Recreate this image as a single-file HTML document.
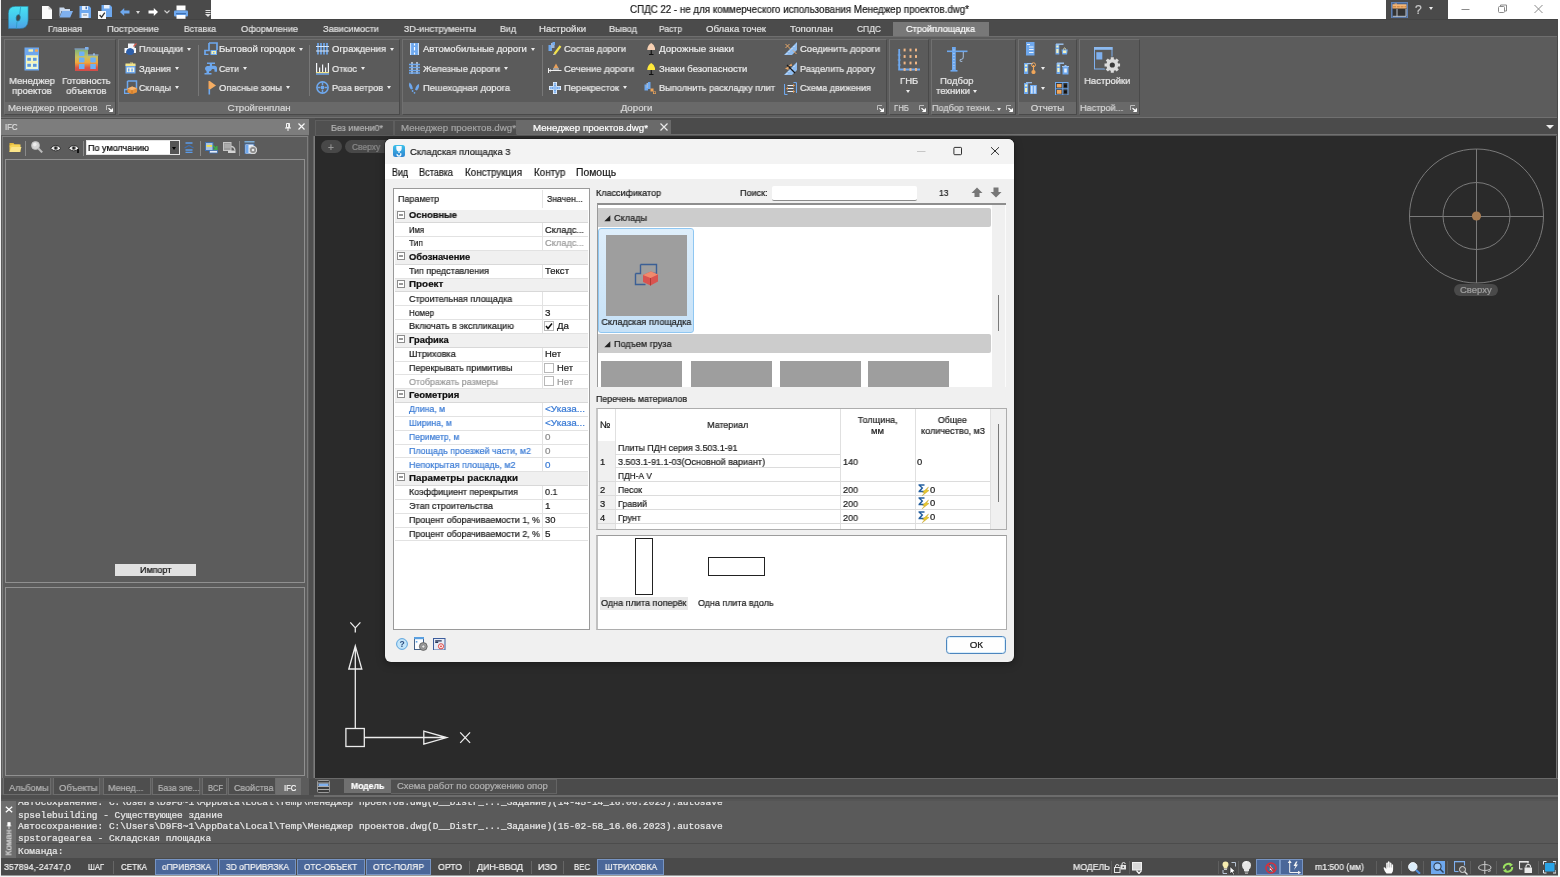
<!DOCTYPE html><html lang="ru"><head><meta charset="utf-8"><title>СПДС 22</title><style>html,body{margin:0;padding:0}body{width:1560px;height:877px;position:relative;overflow:hidden;background:#5c5c5c;font-family:"Liberation Sans",sans-serif}
body div,body span,body svg,body i{position:absolute;display:block}
.t{white-space:pre;font-family:"Liberation Sans",sans-serif;will-change:transform;-webkit-text-stroke:0.220px currentColor}
.m{font-family:"Liberation Mono",monospace}
.d{font-family:"DejaVu Sans",sans-serif}
.ar{width:0;height:0;border-style:solid;border-width:3.800px 2.600px 0 2.600px;border-color:#ececec transparent transparent transparent}
</style></head><body>
<div style="left:0px;top:0px;width:1560px;height:19px;background:#ffffff;"></div>
<div style="left:0px;top:0px;width:211px;height:19px;background:#4a4a4a;"></div>
<div style="left:1386px;top:0px;width:62px;height:19px;background:#4a4a4a;"></div>
<span class="t" style="left:630.00px;top:3.00px;font-size:10px;line-height:13px;color:#1a1a1a;transform:scaleX(0.9743);transform-origin:0 50%;">СПДС 22 - не для коммерческого использования Менеджер проектов.dwg*</span>
<svg style="left:1455px;top:0;width:100px;height:19px" viewBox="0 0 100 19"><g stroke="#8a8a8a" stroke-width="1" fill="none"><path d="M6.5 9.5h8"/><rect x="43.5" y="6.5" width="6" height="6" rx="1"/><path d="M45.5 6.5v-1.5h6v6h-1.5"/><path d="M79.500 5l8 8M87.500 5l-8 8"/></g></svg>
<div style="left:0px;top:19px;width:1560px;height:18px;background:#4b4b4b;"></div>
<div style="left:0px;top:19px;width:1560px;height:1px;background:#434343;"></div>
<span class="t" style="left:48.00px;top:23.40px;font-size:9.5px;line-height:12px;color:#e0e0e0;transform:scaleX(0.9400);transform-origin:0 50%;">Главная</span>
<span class="t" style="left:107.00px;top:23.40px;font-size:9.5px;line-height:12px;color:#e0e0e0;transform:scaleX(0.9829);transform-origin:0 50%;">Построение</span>
<span class="t" style="left:184.00px;top:23.40px;font-size:9.5px;line-height:12px;color:#e0e0e0;transform:scaleX(0.9062);transform-origin:0 50%;">Вставка</span>
<span class="t" style="left:241.00px;top:23.40px;font-size:9.5px;line-height:12px;color:#e0e0e0;transform:scaleX(0.9666);transform-origin:0 50%;">Оформление</span>
<span class="t" style="left:323.00px;top:23.40px;font-size:9.5px;line-height:12px;color:#e0e0e0;transform:scaleX(0.9713);transform-origin:0 50%;">Зависимости</span>
<span class="t" style="left:404.00px;top:23.40px;font-size:9.5px;line-height:12px;color:#e0e0e0;transform:scaleX(0.9859);transform-origin:0 50%;">3D-инструменты</span>
<span class="t" style="left:500.00px;top:23.40px;font-size:9.5px;line-height:12px;color:#e0e0e0;transform:scaleX(0.9309);transform-origin:0 50%;">Вид</span>
<span class="t" style="left:539.00px;top:23.40px;font-size:9.5px;line-height:12px;color:#e0e0e0;transform:scaleX(1.0087);transform-origin:0 50%;">Настройки</span>
<span class="t" style="left:609.00px;top:23.40px;font-size:9.5px;line-height:12px;color:#e0e0e0;transform:scaleX(0.9744);transform-origin:0 50%;">Вывод</span>
<span class="t" style="left:659.00px;top:23.40px;font-size:9.5px;line-height:12px;color:#e0e0e0;transform:scaleX(0.8948);transform-origin:0 50%;">Растр</span>
<span class="t" style="left:706.00px;top:23.40px;font-size:9.5px;line-height:12px;color:#e0e0e0;transform:scaleX(1.0129);transform-origin:0 50%;">Облака точек</span>
<span class="t" style="left:790.00px;top:23.40px;font-size:9.5px;line-height:12px;color:#e0e0e0;transform:scaleX(1.0238);transform-origin:0 50%;">Топоплан</span>
<span class="t" style="left:857.00px;top:23.40px;font-size:9.5px;line-height:12px;color:#e0e0e0;transform:scaleX(0.8894);transform-origin:0 50%;">СПДС</span>
<div style="left:893px;top:22px;width:95.5px;height:14px;background:#787878;"></div>
<span class="t" style="left:906.00px;top:23.40px;font-size:9.5px;line-height:12px;color:#ffffff;transform:scaleX(0.9655);transform-origin:0 50%;">Стройплощадка</span>
<div style="left:0px;top:36px;width:1560px;height:2px;background:#6e6e6e;"></div>
<div style="left:0px;top:37px;width:1560px;height:80px;background:#5c5c5c;"></div>
<div style="left:0px;top:117px;width:1560px;height:1px;background:#707070;"></div>
<div style="left:0px;top:118px;width:1560px;height:1px;background:#505050;"></div>
<div style="left:4px;top:39px;width:112px;height:76px;background:#5b5b5b;border:1px solid #4a4a4a;border-left-color:#707070;border-top-color:#6e6e6e;box-sizing:border-box;"></div>
<div style="left:5px;top:102px;width:110px;height:12px;background:#696969;"></div>
<span class="t" style="left:7.50px;top:102.00px;font-size:9.5px;line-height:12px;color:#d6d6d6;transform:scaleX(1.0106);transform-origin:0 50%;">Менеджер проектов</span>
<svg style="left:106px;top:105px;width:7px;height:7px" viewBox="0 0 7 7"><path d="M0.5 5V0.5H5" stroke="#bdbdbd" fill="none"/><path d="M2.5 3.2L6.5 6.5M6.5 6.5V3.5M6.5 6.5H3.5" stroke="#fff" stroke-width="1.2" fill="none"/><path d="M6.8 6.8H3.2L6.8 3.2z" fill="#fff"/></svg>
<div style="left:118px;top:39px;width:282px;height:76px;background:#5b5b5b;border:1px solid #4a4a4a;border-left-color:#707070;border-top-color:#6e6e6e;box-sizing:border-box;"></div>
<div style="left:119px;top:102px;width:280px;height:12px;background:#696969;"></div>
<span class="t" style="left:227.95px;top:102.00px;font-size:9.5px;line-height:12px;color:#d6d6d6;transform:scaleX(1.0200);transform-origin:50% 50%;">Стройгенплан</span>
<div style="left:402px;top:39px;width:485px;height:76px;background:#5b5b5b;border:1px solid #4a4a4a;border-left-color:#707070;border-top-color:#6e6e6e;box-sizing:border-box;"></div>
<div style="left:403px;top:102px;width:483px;height:12px;background:#696969;"></div>
<span class="t" style="left:621.41px;top:102.00px;font-size:9.5px;line-height:12px;color:#d6d6d6;transform:scaleX(1.0200);transform-origin:50% 50%;">Дороги</span>
<svg style="left:877px;top:105px;width:7px;height:7px" viewBox="0 0 7 7"><path d="M0.5 5V0.5H5" stroke="#bdbdbd" fill="none"/><path d="M2.5 3.2L6.5 6.5M6.5 6.5V3.5M6.5 6.5H3.5" stroke="#fff" stroke-width="1.2" fill="none"/><path d="M6.8 6.8H3.2L6.8 3.2z" fill="#fff"/></svg>
<div style="left:889px;top:39px;width:40px;height:76px;background:#5b5b5b;border:1px solid #4a4a4a;border-left-color:#707070;border-top-color:#6e6e6e;box-sizing:border-box;"></div>
<div style="left:890px;top:102px;width:38px;height:12px;background:#696969;"></div>
<span class="t" style="left:894.00px;top:102.00px;font-size:9.5px;line-height:12px;color:#d6d6d6;transform:scaleX(0.8110);transform-origin:0 50%;">ГНБ</span>
<svg style="left:919px;top:105px;width:7px;height:7px" viewBox="0 0 7 7"><path d="M0.5 5V0.5H5" stroke="#bdbdbd" fill="none"/><path d="M2.5 3.2L6.5 6.5M6.5 6.5V3.5M6.5 6.5H3.5" stroke="#fff" stroke-width="1.2" fill="none"/><path d="M6.8 6.8H3.2L6.8 3.2z" fill="#fff"/></svg>
<div style="left:931px;top:39px;width:85px;height:76px;background:#5b5b5b;border:1px solid #4a4a4a;border-left-color:#707070;border-top-color:#6e6e6e;box-sizing:border-box;"></div>
<div style="left:932px;top:102px;width:83px;height:12px;background:#696969;"></div>
<span class="t" style="left:932.40px;top:102.00px;font-size:9.5px;line-height:12px;color:#d6d6d6;transform:scaleX(0.9485);transform-origin:0 50%;">Подбор техни..</span>
<svg style="left:1006px;top:105px;width:7px;height:7px" viewBox="0 0 7 7"><path d="M0.5 5V0.5H5" stroke="#bdbdbd" fill="none"/><path d="M2.5 3.2L6.5 6.5M6.5 6.5V3.5M6.5 6.5H3.5" stroke="#fff" stroke-width="1.2" fill="none"/><path d="M6.8 6.8H3.2L6.8 3.2z" fill="#fff"/></svg>
<div style="left:1018px;top:39px;width:59px;height:76px;background:#5b5b5b;border:1px solid #4a4a4a;border-left-color:#707070;border-top-color:#6e6e6e;box-sizing:border-box;"></div>
<div style="left:1019px;top:102px;width:57px;height:12px;background:#696969;"></div>
<span class="t" style="left:1030.78px;top:102.00px;font-size:9.5px;line-height:12px;color:#d6d6d6;transform:scaleX(1.0200);transform-origin:50% 50%;">Отчеты</span>
<div style="left:1079px;top:39px;width:61px;height:76px;background:#5b5b5b;border:1px solid #4a4a4a;border-left-color:#707070;border-top-color:#6e6e6e;box-sizing:border-box;"></div>
<div style="left:1080px;top:102px;width:59px;height:12px;background:#696969;"></div>
<span class="t" style="left:1079.80px;top:102.00px;font-size:9.5px;line-height:12px;color:#d6d6d6;transform:scaleX(0.9590);transform-origin:0 50%;">Настрой...</span>
<svg style="left:1130px;top:105px;width:7px;height:7px" viewBox="0 0 7 7"><path d="M0.5 5V0.5H5" stroke="#bdbdbd" fill="none"/><path d="M2.5 3.2L6.5 6.5M6.5 6.5V3.5M6.5 6.5H3.5" stroke="#fff" stroke-width="1.2" fill="none"/><path d="M6.8 6.8H3.2L6.8 3.2z" fill="#fff"/></svg>
<span class="t" style="left:8.95px;top:75.00px;font-size:9.5px;line-height:12px;color:#ececec;transform:scaleX(0.9900);transform-origin:50% 50%;">Менеджер</span>
<span class="t" style="left:12.08px;top:85.00px;font-size:9.5px;line-height:12px;color:#ececec;transform:scaleX(0.9900);transform-origin:50% 50%;">проектов</span>
<span class="t" style="left:61.62px;top:75.00px;font-size:9.5px;line-height:12px;color:#ececec;transform:scaleX(0.9900);transform-origin:50% 50%;">Готовность</span>
<span class="t" style="left:65.77px;top:85.00px;font-size:9.5px;line-height:12px;color:#ececec;transform:scaleX(0.9900);transform-origin:50% 50%;">объектов</span>
<span class="t" style="left:139.00px;top:43.30px;font-size:9.5px;line-height:12px;color:#ececec;transform:scaleX(0.9591);transform-origin:0 50%;">Площадки</span>
<i class="ar" style="left:187px;top:47.5px"></i>
<span class="t" style="left:139.00px;top:62.50px;font-size:9.5px;line-height:12px;color:#ececec;transform:scaleX(0.9918);transform-origin:0 50%;">Здания</span>
<i class="ar" style="left:175px;top:66.7px"></i>
<span class="t" style="left:139.00px;top:82.00px;font-size:9.5px;line-height:12px;color:#ececec;transform:scaleX(0.9322);transform-origin:0 50%;">Склады</span>
<i class="ar" style="left:175px;top:86.2px"></i>
<span class="t" style="left:219.00px;top:43.30px;font-size:9.5px;line-height:12px;color:#ececec;transform:scaleX(1.0180);transform-origin:0 50%;">Бытовой городок</span>
<i class="ar" style="left:299px;top:47.5px"></i>
<span class="t" style="left:219.00px;top:62.50px;font-size:9.5px;line-height:12px;color:#ececec;transform:scaleX(0.9302);transform-origin:0 50%;">Сети</span>
<i class="ar" style="left:243px;top:66.7px"></i>
<span class="t" style="left:219.00px;top:82.00px;font-size:9.5px;line-height:12px;color:#ececec;transform:scaleX(0.9817);transform-origin:0 50%;">Опасные зоны</span>
<i class="ar" style="left:286px;top:86.2px"></i>
<span class="t" style="left:332.00px;top:43.30px;font-size:9.5px;line-height:12px;color:#ececec;transform:scaleX(0.9942);transform-origin:0 50%;">Ограждения</span>
<i class="ar" style="left:390px;top:47.5px"></i>
<span class="t" style="left:332.00px;top:62.50px;font-size:9.5px;line-height:12px;color:#ececec;transform:scaleX(0.9598);transform-origin:0 50%;">Откос</span>
<i class="ar" style="left:361px;top:66.7px"></i>
<span class="t" style="left:332.00px;top:82.00px;font-size:9.5px;line-height:12px;color:#ececec;transform:scaleX(0.9577);transform-origin:0 50%;">Роза ветров</span>
<i class="ar" style="left:387px;top:86.2px"></i>
<span class="t" style="left:423.00px;top:43.30px;font-size:9.5px;line-height:12px;color:#ececec;">Автомобильные дороги</span>
<i class="ar" style="left:531px;top:47.5px"></i>
<span class="t" style="left:423.00px;top:62.50px;font-size:9.5px;line-height:12px;color:#ececec;transform:scaleX(0.9776);transform-origin:0 50%;">Железные дороги</span>
<i class="ar" style="left:504px;top:66.7px"></i>
<span class="t" style="left:423.00px;top:82.00px;font-size:9.5px;line-height:12px;color:#ececec;transform:scaleX(0.9850);transform-origin:0 50%;">Пешеходная дорога</span>
<span class="t" style="left:564.00px;top:43.30px;font-size:9.5px;line-height:12px;color:#ececec;transform:scaleX(0.9645);transform-origin:0 50%;">Состав дороги</span>
<span class="t" style="left:564.00px;top:62.50px;font-size:9.5px;line-height:12px;color:#ececec;transform:scaleX(0.9901);transform-origin:0 50%;">Сечение дороги</span>
<span class="t" style="left:564.00px;top:82.00px;font-size:9.5px;line-height:12px;color:#ececec;transform:scaleX(0.9849);transform-origin:0 50%;">Перекресток</span>
<i class="ar" style="left:623px;top:86.2px"></i>
<span class="t" style="left:659.00px;top:43.30px;font-size:9.5px;line-height:12px;color:#ececec;transform:scaleX(1.0274);transform-origin:0 50%;">Дорожные знаки</span>
<span class="t" style="left:659.00px;top:62.50px;font-size:9.5px;line-height:12px;color:#ececec;">Знаки безопасности</span>
<span class="t" style="left:659.00px;top:82.00px;font-size:9.5px;line-height:12px;color:#ececec;transform:scaleX(0.9717);transform-origin:0 50%;">Выполнить раскладку плит</span>
<span class="t" style="left:800.00px;top:43.30px;font-size:9.5px;line-height:12px;color:#ececec;transform:scaleX(0.9909);transform-origin:0 50%;">Соединить дороги</span>
<span class="t" style="left:800.00px;top:62.50px;font-size:9.5px;line-height:12px;color:#ececec;transform:scaleX(0.9583);transform-origin:0 50%;">Разделить дорогу</span>
<span class="t" style="left:800.00px;top:82.00px;font-size:9.5px;line-height:12px;color:#ececec;transform:scaleX(0.9532);transform-origin:0 50%;">Схема движения</span>
<div style="left:198px;top:45px;width:1px;height:51px;background:#777;"></div>
<div style="left:309px;top:45px;width:1px;height:51px;background:#777;"></div>
<div style="left:542px;top:45px;width:1px;height:51px;background:#777;"></div>
<span class="t" style="left:899.67px;top:75.00px;font-size:9.5px;line-height:12px;color:#ececec;transform:scaleX(0.9900);transform-origin:50% 50%;">ГНБ</span>
<i class="ar" style="left:906px;top:89.500px"></i>
<span class="t" style="left:939.97px;top:75.00px;font-size:9.5px;line-height:12px;color:#ececec;transform:scaleX(0.9900);transform-origin:50% 50%;">Подбор</span>
<span class="t" style="left:936.25px;top:85.00px;font-size:9.5px;line-height:12px;color:#ececec;transform:scaleX(0.9900);transform-origin:50% 50%;">техники</span>
<i class="ar" style="left:973px;top:89.500px"></i>
<i class="ar" style="left:996.500px;top:107.500px"></i>
<span class="t" style="left:1083.70px;top:75.00px;font-size:9.5px;line-height:12px;color:#ececec;transform:scaleX(0.9900);transform-origin:50% 50%;">Настройки</span>
<i class="ar" style="left:1041px;top:67px"></i><i class="ar" style="left:1041px;top:87px"></i>
<span class="t" style="left:1414.66px;top:1.70px;font-size:12px;line-height:16px;color:#c8c8c8;">?</span>
<i class="ar" style="left:1428.600px;top:7.300px"></i>
<div style="left:0px;top:119px;width:309px;height:16px;background:#7d7d7d;"></div>
<div style="left:0px;top:135px;width:309px;height:1px;background:#5c5c5c;"></div>
<span class="t" style="left:4.50px;top:121.00px;font-size:9.5px;line-height:12px;color:#e0e0e0;transform:scaleX(0.8163);transform-origin:0 50%;">IFC</span>
<div style="left:0px;top:136px;width:309px;height:642px;background:#5c5c5c;"></div>
<div style="left:2px;top:136px;width:306px;height:1px;background:#858585;"></div>
<div style="left:309px;top:119px;width:6px;height:660px;background:#4f4f4f;"></div>
<div style="left:307px;top:137px;width:1px;height:641px;background:#7c7c7c;"></div>
<div style="left:2px;top:137px;width:1px;height:641px;background:#7c7c7c;"></div>
<div style="left:313px;top:136px;width:1px;height:642px;background:#686868;"></div>
<div style="left:314px;top:136px;width:1px;height:642px;background:#7c7c7c;"></div>
<div style="left:86px;top:140px;width:94px;height:15px;background:#ffffff;border:1px solid #e4e4e4;box-sizing:border-box;"></div>
<div style="left:170px;top:141px;width:9px;height:13px;background:#555555;"></div>
<i class="ar" style="left:172px;top:147px;border-width:3px 2.500px 0 2.500px;border-top-color:#000"></i>
<span class="t" style="left:88.00px;top:142.00px;font-size:9.5px;line-height:12px;color:#000;transform:scaleX(0.9494);transform-origin:0 50%;">По умолчанию</span>
<div style="left:25px;top:141px;width:1px;height:15px;background:#8a8a8a;"></div>
<div style="left:83px;top:141px;width:1px;height:15px;background:#8a8a8a;"></div>
<div style="left:200px;top:141px;width:1px;height:15px;background:#8a8a8a;"></div>
<div style="left:239px;top:141px;width:1px;height:15px;background:#8a8a8a;"></div>
<div style="left:5px;top:159px;width:300px;height:424px;background:#5c5c5c;border:1px solid #909090;box-sizing:border-box;"></div>
<div style="left:115px;top:564px;width:81px;height:12px;background:#e1e1e1;"></div>
<span class="t" style="left:139.80px;top:563.70px;font-size:9.3px;line-height:12px;color:#111;transform:scaleX(0.9657);transform-origin:0 50%;">Импорт</span>
<div style="left:5px;top:587px;width:300px;height:189px;background:#5c5c5c;border:1px solid #909090;box-sizing:border-box;"></div>
<div style="left:0px;top:778px;width:309px;height:19px;background:#5c5c5c;"></div>
<div style="left:3px;top:778px;width:48px;height:17px;background:#4e4e4e;border:1px solid #6c6c6c;border-top:none;box-sizing:border-box;"></div>
<span class="t" style="left:9.20px;top:782.00px;font-size:9.5px;line-height:12px;color:#b4b4b4;transform:scaleX(0.9677);transform-origin:0 50%;">Альбомы</span>
<div style="left:53px;top:778px;width:47px;height:17px;background:#4e4e4e;border:1px solid #6c6c6c;border-top:none;box-sizing:border-box;"></div>
<span class="t" style="left:58.90px;top:782.00px;font-size:9.5px;line-height:12px;color:#b4b4b4;transform:scaleX(0.9825);transform-origin:0 50%;">Объекты</span>
<div style="left:103px;top:778px;width:48px;height:17px;background:#4e4e4e;border:1px solid #6c6c6c;border-top:none;box-sizing:border-box;"></div>
<span class="t" style="left:108.30px;top:782.00px;font-size:9.5px;line-height:12px;color:#b4b4b4;transform:scaleX(0.9516);transform-origin:0 50%;">Менед...</span>
<div style="left:152px;top:778px;width:48px;height:17px;background:#4e4e4e;border:1px solid #6c6c6c;border-top:none;box-sizing:border-box;"></div>
<span class="t" style="left:157.50px;top:782.00px;font-size:9.5px;line-height:12px;color:#b4b4b4;transform:scaleX(0.8815);transform-origin:0 50%;">База эле...</span>
<div style="left:202px;top:778px;width:25px;height:17px;background:#4e4e4e;border:1px solid #6c6c6c;border-top:none;box-sizing:border-box;"></div>
<span class="t" style="left:207.60px;top:782.00px;font-size:9.5px;line-height:12px;color:#b4b4b4;transform:scaleX(0.7895);transform-origin:0 50%;">BCF</span>
<div style="left:228px;top:778px;width:48px;height:17px;background:#4e4e4e;border:1px solid #6c6c6c;border-top:none;box-sizing:border-box;"></div>
<span class="t" style="left:233.80px;top:782.00px;font-size:9.5px;line-height:12px;color:#b4b4b4;transform:scaleX(0.9444);transform-origin:0 50%;">Свойства</span>
<div style="left:276px;top:778px;width:25px;height:18px;background:#707070;"></div>
<span class="t" style="left:283.50px;top:782.00px;font-size:9.5px;line-height:12px;color:#fff;transform:scaleX(0.8033);transform-origin:0 50%;">IFC</span>
<div style="left:315px;top:118px;width:1245px;height:17px;background:#4b4b4b;"></div>
<div style="left:315px;top:134px;width:1245px;height:1px;background:#707070;"></div>
<div style="left:315px;top:135px;width:1245px;height:1px;background:#5a5a5a;"></div>
<div style="left:315px;top:120px;width:79px;height:15px;background:#505050;border:1px solid #5e5e5e;border-bottom:none;box-sizing:border-box;"></div>
<span class="t" style="left:331.00px;top:121.50px;font-size:9.5px;line-height:12px;color:#b4b4b4;transform:scaleX(0.9460);transform-origin:0 50%;">Без имени0*</span>
<div style="left:394px;top:120px;width:123px;height:15px;background:#505050;border:1px solid #5e5e5e;border-bottom:none;box-sizing:border-box;"></div>
<span class="t" style="left:400.50px;top:121.50px;font-size:9.5px;line-height:12px;color:#a4a4a4;transform:scaleX(1.0238);transform-origin:0 50%;">Менеджер проектов.dwg*</span>
<div style="left:516px;top:120px;width:155px;height:14px;background:#6a6a6a;"></div>
<span class="t" style="left:533.00px;top:121.50px;font-size:9.5px;line-height:12px;color:#ffffff;transform:scaleX(1.0238);transform-origin:0 50%;">Менеджер проектов.dwg*</span>
<svg style="left:659.500px;top:123px;width:8px;height:8px" viewBox="0 0 8 8"><path d="M0.500 0.500l7 7M7.500 0.500l-7 7" stroke="#e8e8e8" stroke-width="1.2"/></svg>
<i class="ar" style="left:1545.700px;top:124.800px;border-width:4.300px 4px 0 4px;border-top-color:#ececec"></i>
<div style="left:315px;top:136px;width:1241px;height:642px;background:#2a2a2a;"></div>
<div style="left:1556px;top:136px;width:1px;height:642px;background:#747474;"></div>
<div style="left:1557px;top:19px;width:1px;height:858px;background:#4a4a4a;"></div>
<div style="left:321px;top:140px;width:20.5px;height:13px;background:#484848;border-radius:7px;"></div>
<span class="t" style="left:328.38px;top:140.70px;font-size:10px;line-height:13px;color:#959595;">+</span>
<div style="left:344.5px;top:140px;width:60px;height:13px;background:#484848;border-radius:7px;"></div>
<span class="t" style="left:351.80px;top:140.50px;font-size:9.5px;line-height:12px;color:#8c8c8c;transform:scaleX(0.8878);transform-origin:0 50%;">Сверху</span>
<svg style="left:1400px;top:140px;width:160px;height:160px" viewBox="1400 140 160 160"><g fill="none" stroke="#7a7a7a" stroke-width="1"><circle cx="1476.5" cy="216" r="67"/><circle cx="1476.5" cy="216" r="33.5"/><path d="M1409.5 216.5h134M1476.5 149v134"/></g><circle cx="1476.5" cy="216" r="4.6" fill="#a87c52"/></svg>
<div style="left:1454px;top:284px;width:44px;height:12px;background:#4a4a4a;border-radius:6px;"></div>
<span class="t" style="left:1460.12px;top:284.00px;font-size:9.5px;line-height:12px;color:#a0a0a0;">Сверху</span>
<svg style="left:330px;top:610px;width:160px;height:150px" viewBox="330 610 160 150"><g fill="none" stroke="#ececec" stroke-width="1.300"><rect x="345.900" y="728.500" width="18.400" height="18"/><path d="M355.300 728.500V646M348.800 669L355.300 645.800 361.800 669zM364.300 737.500H446.500M423.800 731.200L446.700 737.500 423.800 744.200z"/><path d="M350.300 622.400l5 5.500 5.100-5.500M355.300 627.900v4.700M460.200 732.400l9.900 10.500M470.100 732.400l-9.900 10.500"/></g></svg>
<div style="left:315px;top:778px;width:1245px;height:1px;background:#6a6a6a;"></div>
<div style="left:309px;top:779px;width:1251px;height:16px;background:#4b4b4b;"></div>
<div style="left:314px;top:795px;width:1246px;height:2px;background:#6c6c6c;"></div>
<div style="left:0px;top:795px;width:314px;height:2px;background:#4f4f4f;"></div>
<svg style="left:317px;top:780px;width:13px;height:13px" viewBox="0 0 13 13"><rect x="0.500" y="0.500" width="12" height="12" rx="1" fill="#3c3c3c" stroke="#9a9a9a"/><rect x="1.500" y="3.500" width="10" height="2.600" fill="#7fb0ee"/><path d="M1 3h11M1 6.500h11M1 9.500h11" stroke="#c4c4c4" stroke-width="0.800"/></svg>
<div style="left:344px;top:779px;width:47px;height:14px;background:#707070;"></div>
<span class="t" style="left:350.80px;top:780.40px;font-size:9.5px;line-height:12px;color:#fff;font-weight:700;transform:scaleX(0.9026);transform-origin:0 50%;">Модель</span>
<div style="left:391px;top:779px;width:166px;height:15px;background:#4f4f4f;border:1px solid #646464;border-left:none;box-sizing:border-box;"></div>
<span class="t" style="left:397.40px;top:780.40px;font-size:9.5px;line-height:12px;color:#b0b0b0;">Схема работ по сооружению опор</span>
<div style="left:0px;top:797px;width:1560px;height:2px;background:#4f4f4f;"></div>
<div style="left:0px;top:799px;width:1560px;height:2px;background:#555555;"></div>
<div style="left:0px;top:801px;width:1560px;height:57px;background:#5a5a5a;"></div>
<div style="left:1px;top:801px;width:15px;height:57px;background:#6d6d6d;"></div>
<div style="left:16px;top:843px;width:1544px;height:1px;background:#4c4c4c;"></div>
<div style="left:13px;top:801.500px;width:1547px;height:56px;overflow:hidden">
<span class="t m" style="left:5.00px;top:-4.50px;font-size:9.48px;line-height:12px;color:#e8e8e8;">Автосохранение: C:\Users\D9F8~1\AppData\Local\Temp\Менеджер проектов.dwg(D__Distr_..._Задание)(14-45-14_16.06.2023).autosave</span>
<span class="t m" style="left:5.00px;top:8.00px;font-size:9.48px;line-height:12px;color:#e8e8e8;">spselebuilding - Существующее здание</span>
<span class="t m" style="left:5.00px;top:19.50px;font-size:9.48px;line-height:12px;color:#e8e8e8;">Автосохранение: C:\Users\D9F8~1\AppData\Local\Temp\Менеджер проектов.dwg(D__Distr_..._Задание)(15-02-58_16.06.2023).autosave</span>
<span class="t m" style="left:5.00px;top:31.00px;font-size:9.48px;line-height:12px;color:#e8e8e8;">spstoragearea - Складская площадка</span>
<span class="t m" style="left:5.00px;top:44.50px;font-size:9.48px;line-height:12px;color:#e8e8e8;">Команда:</span>
</div>
<svg style="left:4.500px;top:805.500px;width:8px;height:7px" viewBox="0 0 8 7"><path d="M0.800 0.800l6.400 5.400M7.200 0.800l-6.400 5.400" stroke="#fff" stroke-width="1.300"/></svg>
<svg style="left:5.500px;top:821.500px;width:6px;height:7px" viewBox="0 0 7 9"><path d="M2 0.500h3v4h-3zM0.500 5h6M3.500 5v4" stroke="#fff" fill="#fff" stroke-width="1"/></svg>
<span class="t" style="left:-5px;top:838px;width:26px;font-size:9.500px;line-height:11px;color:#dcdcdc;transform:rotate(-90deg) scaleX(0.92);text-align:left">Коман</span>
<div style="left:0px;top:858px;width:1560px;height:19px;background:#4a4a4a;"></div>
<div style="left:0px;top:875px;width:1560px;height:1px;background:#9a9a9a;"></div>
<div style="left:0px;top:876px;width:1560px;height:1px;background:#f4f4f4;"></div>
<span class="t" style="left:3.80px;top:861.30px;font-size:9.5px;line-height:12px;color:#f0f0f0;transform:scaleX(0.9284);transform-origin:0 50%;">357894,-24747,0</span>
<span class="t" style="left:88.00px;top:861.00px;font-size:9.5px;line-height:12px;color:#f4f4f4;transform:scaleX(0.7926);transform-origin:0 50%;">ШАГ</span>
<span class="t" style="left:121.00px;top:861.00px;font-size:9.5px;line-height:12px;color:#f4f4f4;transform:scaleX(0.8421);transform-origin:0 50%;">СЕТКА</span>
<div style="left:155px;top:859px;width:63px;height:16px;background:#4a6799;border:1px solid #7794c2;box-sizing:border-box;"></div>
<span class="t" style="left:162.00px;top:861.00px;font-size:9.5px;line-height:12px;color:#f4f4f4;transform:scaleX(0.8784);transform-origin:0 50%;">оПРИВЯЗКА</span>
<div style="left:219px;top:859px;width:77px;height:16px;background:#4a6799;border:1px solid #7794c2;box-sizing:border-box;"></div>
<span class="t" style="left:226.00px;top:861.00px;font-size:9.5px;line-height:12px;color:#f4f4f4;transform:scaleX(0.8928);transform-origin:0 50%;">3D оПРИВЯЗКА</span>
<div style="left:297px;top:859px;width:68px;height:16px;background:#4a6799;border:1px solid #7794c2;box-sizing:border-box;"></div>
<span class="t" style="left:304.00px;top:861.00px;font-size:9.5px;line-height:12px;color:#f4f4f4;transform:scaleX(0.8587);transform-origin:0 50%;">ОТС-ОБЪЕКТ</span>
<div style="left:366px;top:859px;width:65px;height:16px;background:#4a6799;border:1px solid #7794c2;box-sizing:border-box;"></div>
<span class="t" style="left:373.00px;top:861.00px;font-size:9.5px;line-height:12px;color:#f4f4f4;transform:scaleX(0.8984);transform-origin:0 50%;">ОТС-ПОЛЯР</span>
<span class="t" style="left:438.00px;top:861.00px;font-size:9.5px;line-height:12px;color:#f4f4f4;transform:scaleX(0.9203);transform-origin:0 50%;">ОРТО</span>
<span class="t" style="left:477.00px;top:861.00px;font-size:9.5px;line-height:12px;color:#f4f4f4;transform:scaleX(0.9337);transform-origin:0 50%;">ДИН-ВВОД</span>
<span class="t" style="left:538.00px;top:861.00px;font-size:9.5px;line-height:12px;color:#f4f4f4;transform:scaleX(0.9567);transform-origin:0 50%;">ИЗО</span>
<span class="t" style="left:574.00px;top:861.00px;font-size:9.5px;line-height:12px;color:#f4f4f4;transform:scaleX(0.8185);transform-origin:0 50%;">ВЕС</span>
<div style="left:597px;top:859px;width:67px;height:16px;background:#4a6799;border:1px solid #7794c2;box-sizing:border-box;"></div>
<span class="t" style="left:605.00px;top:861.00px;font-size:9.5px;line-height:12px;color:#f4f4f4;transform:scaleX(0.8769);transform-origin:0 50%;">ШТРИХОВКА</span>
<div style="left:113px;top:861px;width:1px;height:13px;background:#666;"></div>
<div style="left:469px;top:861px;width:1px;height:13px;background:#666;"></div>
<div style="left:531px;top:861px;width:1px;height:13px;background:#666;"></div>
<div style="left:563px;top:861px;width:1px;height:13px;background:#666;"></div>
<span class="t" style="left:1073.00px;top:861.00px;font-size:9.5px;line-height:12px;color:#f0f0f0;transform:scaleX(0.9171);transform-origin:0 50%;">МОДЕЛЬ</span>
<span class="t" style="left:1315.00px;top:861.00px;font-size:9.5px;line-height:12px;color:#f0f0f0;transform:scaleX(0.9122);transform-origin:0 50%;">m1:500 (мм)</span>
<div style="left:1256px;top:859px;width:24px;height:16px;background:#4a6799;border:1px solid #7794c2;box-sizing:border-box;"></div>
<div style="left:1280px;top:859px;width:23px;height:16px;background:#4a6799;border:1px solid #7794c2;box-sizing:border-box;"></div>
<div style="left:1111px;top:861px;width:1px;height:13px;background:#5e5e5e;"></div>
<div style="left:1129px;top:861px;width:1px;height:13px;background:#5e5e5e;"></div>
<div style="left:1218px;top:861px;width:1px;height:13px;background:#5e5e5e;"></div>
<div style="left:1238px;top:861px;width:1px;height:13px;background:#5e5e5e;"></div>
<div style="left:1376px;top:861px;width:1px;height:13px;background:#5e5e5e;"></div>
<div style="left:1401px;top:861px;width:1px;height:13px;background:#5e5e5e;"></div>
<div style="left:1423px;top:861px;width:1px;height:13px;background:#5e5e5e;"></div>
<div style="left:1447px;top:861px;width:1px;height:13px;background:#5e5e5e;"></div>
<div style="left:1470px;top:861px;width:1px;height:13px;background:#5e5e5e;"></div>
<div style="left:1496px;top:861px;width:1px;height:13px;background:#5e5e5e;"></div>
<div style="left:1538px;top:861px;width:1px;height:13px;background:#5e5e5e;"></div>
<div style="left:0px;top:0px;width:1px;height:877px;background:#f0f0f0;"></div>
<div style="left:1558px;top:19px;width:2px;height:858px;background:#ffffff;"></div>
<svg style="left:8px;top:5.5px;width:20.5px;height:23px" viewBox="0 0 20.5 23"><defs><linearGradient id="lg" x1="0" y1="0" x2="0" y2="1"><stop offset="0" stop-color="#48e2f3"/><stop offset="0.500" stop-color="#45c8ee"/><stop offset="1" stop-color="#4f9fe6"/></linearGradient></defs><path d="M7.500 0.300H20.200V14Q20.200 22.700 11.500 22.700H0.300V7.500Q0.300 0.300 7.500 0.300z" fill="url(#lg)" stroke="#2a6f8c" stroke-width="0.600"/><path d="M12.700 0.500L11.600 9M9 15.500L8.300 22.500" stroke="#2b9cc0" stroke-width="0.800" fill="none"/><ellipse cx="10.200" cy="11.900" rx="2" ry="3.200" fill="#43494e" stroke="#23748f" stroke-width="0.700" transform="rotate(6 10.200 11.900)"/></svg>
<svg style="left:42px;top:6px;width:10px;height:13px" viewBox="0 0 10 13"><path d="M0 0h6.500L10 3.500V13H0z" fill="#fafafa"/><path d="M6.500 0v3.500H10z" fill="#c8c8c8"/></svg>
<svg style="left:59px;top:7px;width:14px;height:11px" viewBox="0 0 14 11"><path d="M0.500 0.500h4.500l1 1.500h5v2h-8.500L0.500 10z" fill="#c9d9ee"/><path d="M3 4h11l-2.800 6.500H0.500z" fill="#7fb0ee"/></svg>
<svg style="left:79px;top:6px;width:12px;height:12px" viewBox="0 0 12 12"><path d="M0.500 0h9.500l2 2v10H0.500z" fill="#6ea8ee"/><rect x="3" y="0" width="6" height="4" fill="#e8f0fb"/><rect x="6.500" y="0.600" width="1.500" height="2.600" fill="#4a78b8"/><rect x="2.500" y="7" width="7" height="5" fill="#e8f0fb"/><rect x="4" y="8.500" width="4" height="1" fill="#888"/></svg>
<svg style="left:98px;top:5px;width:14px;height:14px" viewBox="0 0 14 14"><path d="M3.500 0h8.500l2 2v10H3.500z" fill="#6ea8ee"/><rect x="6" y="0" width="5.500" height="3.500" fill="#e8f0fb"/><rect x="0" y="6" width="8" height="8" fill="#fbfbfb"/><path d="M1.600 10l2 2.200 3.200-4.500" stroke="#333" stroke-width="1.300" fill="none"/></svg>
<svg style="left:120px;top:8px;width:10px;height:8px" viewBox="0 0 10 8"><path d="M0 4l4.200-4v2.600H9.500v2.800H4.200V8z" fill="#6ea8ee"/></svg>
<svg style="left:148px;top:8px;width:10px;height:8px" viewBox="0 0 10 8"><path d="M10 4l-4.200-4v2.600H0.500v2.800h5.300V8z" fill="#ffffff"/></svg>
<i class="ar" style="left:136px;top:10.500px;border-width:3.500px 2.700px 0 2.700px;border-top-color:#d8d8d8"></i>
<svg style="left:164px;top:10px;width:6px;height:4px" viewBox="0 0 6 4"><path d="M0.500 0.500l2.500 2.500 2.500-2.500" stroke="#cfcfcf" stroke-width="1.200" fill="none"/></svg>
<svg style="left:174px;top:5px;width:14px;height:14px" viewBox="0 0 14 14"><rect x="2.500" y="0.500" width="9" height="5" fill="#fdfdfd"/><rect x="0" y="5.500" width="14" height="6" rx="1" fill="#6ea8ee"/><rect x="2" y="8.300" width="10" height="0.900" fill="#2d5c9c"/><rect x="2.500" y="10" width="9" height="3.800" fill="#fdfdfd"/></svg>
<svg style="left:205px;top:10px;width:6px;height:7px" viewBox="0 0 6 7"><path d="M0.500 0.500h5M0.500 2.500h5" stroke="#e0e0e0" stroke-width="1"/><path d="M0 4h6L3 7z" fill="#e0e0e0"/></svg>
<svg style="left:1391px;top:1.5px;width:17px;height:16.5px" viewBox="0 0 17 16.5"><rect x="0.500" y="0.500" width="16" height="15.500" fill="#4a6590" stroke="#5f82b6"/><rect x="1.800" y="6" width="13.400" height="8.500" fill="#333"/><rect x="1.500" y="2.300" width="14" height="4.200" fill="#f6b572"/><path d="M2 4.800h13" stroke="#b8743a" stroke-width="0.900" stroke-dasharray="3 0.800"/><path d="M3.500 2h2.500" stroke="#f6b572" stroke-width="1"/><path d="M6 7v7.500M1.800 14.300h13.400M15 7v7" stroke="#c9d3e0" stroke-width="0.900"/></svg>
<svg style="left:24px;top:47px;width:16px;height:24px" viewBox="0 0 16 24"><rect x="0.500" y="0.500" width="14.500" height="23" fill="#6ea8ee"/><rect x="4.500" y="2.300" width="4.500" height="2.400" fill="#f7f3b0"/><rect x="11" y="2.300" width="3" height="2.400" fill="#f0a65a"/><rect x="2" y="8.500" width="12" height="13.500" fill="#e9f7d8"/><rect x="2" y="8.500" width="12" height="1.500" fill="#f7f3b0"/><rect x="2" y="14.300" width="12" height="1.600" fill="#f7f3b0"/><rect x="3.300" y="10.800" width="3.600" height="3" fill="#5b96dc"/><rect x="9" y="10.800" width="3.600" height="3" fill="#5b96dc"/><rect x="3.300" y="16.800" width="3.600" height="3" fill="#5b96dc"/><rect x="9" y="16.800" width="3.600" height="3" fill="#5b96dc"/></svg>
<svg style="left:74px;top:46px;width:25px;height:26px" viewBox="0 0 25 26"><defs><linearGradient id="bg1" x1="0" y1="0" x2="0" y2="1"><stop offset="0" stop-color="#7fb37a"/><stop offset="0.350" stop-color="#c7c163"/><stop offset="0.600" stop-color="#f0a93c"/><stop offset="0.850" stop-color="#d9564a"/><stop offset="1" stop-color="#d14c48"/></linearGradient></defs><path d="M1 3.500h13v6h10v15.500H1z" fill="url(#bg1)"/><path d="M0.500 3h14M13.500 9h11" stroke="#8fb7e6" stroke-width="1"/><rect x="11" y="1" width="3.500" height="2.500" fill="#7fb0ee"/><rect x="19.200" y="7.300" width="1.600" height="2" fill="#9cc4f3"/><g fill="#6eb1f6"><rect x="5" y="5.500" width="5.500" height="4.500" rx="1"/><rect x="5" y="11.500" width="5.500" height="5" rx="1"/><rect x="16.300" y="11.500" width="5.500" height="5" rx="1"/><rect x="5" y="18" width="5.500" height="5"/><rect x="16.300" y="18" width="5.500" height="5"/></g></svg>
<svg style="left:124px;top:43px;width:13px;height:13px" viewBox="0 0 13 13"><path d="M4 0.500h6.500v4.500H12v5H0.500V5H4z" fill="#f4f6fa"/><path d="M3 6.500q3-3 6.500 0 1.500 3-1 5-3.500 1.500-6-1-1-2 0.500-4z" fill="#2f5fa8"/><path d="M9.500 3.500l3-3" stroke="#e05a4a" stroke-width="1.200"/><path d="M1.500 7v3M10.500 8.500h1.500" stroke="#fff" stroke-width="1"/></svg>
<svg style="left:124.5px;top:62px;width:11px;height:12px" viewBox="0 0 11 12"><path d="M0.500 2.500h10v9h-10z" fill="#6ea8ee"/><rect x="0.500" y="1.500" width="10" height="2.500" fill="#f4e58a"/><path d="M6 0v2M7.500 0.500v1.500" stroke="#f4e58a" stroke-width="0.800"/><rect x="1.800" y="5.500" width="7.500" height="4.500" fill="#f5f7e6"/><rect x="3" y="6.500" width="1.500" height="3" fill="#6ea8ee"/><rect x="6.300" y="6.500" width="1.500" height="3" fill="#6ea8ee"/></svg>
<svg style="left:123.5px;top:80px;width:14px;height:14px" viewBox="0 0 14 14"><path d="M3.500 1h9v9.500M3.500 1v8.500H0.500v4h5" fill="none" stroke="#6ea8ee" stroke-width="1.500"/><path d="M3.500 8.500l4.500-2 5 1.800v4l-5 2-4.500-2z" fill="#e8923a"/><path d="M3.500 8.500l4.500 1.800 5-2-4.800-1.800z" fill="#f6b877"/><path d="M8 10.300v4" stroke="#b86a1e" stroke-width="0.800"/></svg>
<svg style="left:203.5px;top:42px;width:14px;height:13px" viewBox="0 0 14 13"><path d="M5 1h8v7M5 1v7.500H1v4h3.500" fill="none" stroke="#6ea8ee" stroke-width="1.700"/><rect x="6.500" y="8" width="6.500" height="5" fill="#6ea8ee"/><rect x="7.500" y="9" width="4.500" height="3" fill="#f4f3b0"/><rect x="9" y="10" width="1.500" height="1.500" fill="#6ea8ee"/></svg>
<svg style="left:203.5px;top:61.5px;width:13.5px;height:13px" viewBox="0 0 13.5 13"><path d="M3 0.500h8v1.600H8v1.700h2.500q2.500 0 2.500 2.500v3.500h-2.500V8q0-1-1-1H8q-0.500 2-3 2.500V11H7.500v1.500H0.500V11H2.500V9Q1 8 1 6.500 1 4.500 3 4H5.800V2.100H3z" fill="#6ea8ee"/></svg>
<svg style="left:207.5px;top:81px;width:9px;height:13.5px" viewBox="0 0 9 13.5"><rect x="0.500" y="0" width="1.600" height="8" fill="#f3a75c"/><rect x="0.500" y="8" width="1.600" height="5.500" fill="#6ea8ee"/><path d="M2 0.300L8 4.500 2 8.500z" fill="#f6ae63"/></svg>
<svg style="left:316px;top:43px;width:13px;height:12px" viewBox="0 0 13 12"><g stroke="#6ea8ee" stroke-width="1.700"><path d="M2 0v11.500M5 0v11.500M8 0v11.500M11 0v11.500"/></g><path d="M0 3.500h13M0 8h13" stroke="#d6e6fa" stroke-width="1.200"/></svg>
<svg style="left:316px;top:62.5px;width:13px;height:12px" viewBox="0 0 13 12"><path d="M0.600 0v9.500M3.600 4.500v5M6.600 1.500v8M9.600 4.500v5M12.400 0v9.500" stroke="#f4f6fa" stroke-width="1.200"/><rect x="0" y="9" width="13" height="1.300" fill="#f4e58a"/><rect x="0" y="10.300" width="13" height="1.400" fill="#6ea8ee"/></svg>
<svg style="left:316px;top:81px;width:13px;height:13px" viewBox="0 0 13 13"><circle cx="6.500" cy="6.500" r="5.600" fill="none" stroke="#6ea8ee" stroke-width="1.600"/><circle cx="6.500" cy="6.500" r="2" fill="#6ea8ee"/><path d="M6.500 1.500v2.500M6.500 9v2.500M1.500 6.500H4M9 6.500h2.500" stroke="#6ea8ee" stroke-width="1.500"/></svg>
<svg style="left:409.5px;top:43px;width:9px;height:12px" viewBox="0 0 9 12"><rect x="0" y="0" width="9" height="12" fill="#6ea8ee"/><path d="M0.600 0v12M8.400 0v12" stroke="#e4eefb" stroke-width="0.900"/><path d="M4.500 0.500v2M4.500 4v3.500M4.500 9.500v2" stroke="#fff" stroke-width="1.200"/></svg>
<svg style="left:409px;top:62px;width:11px;height:12px" viewBox="0 0 11 12"><path d="M3 0v12M8 0v12" stroke="#e4eefb" stroke-width="1.300"/><path d="M0 2.500h11M0 5.500h11M0 8.500h11M0 11h11" stroke="#6ea8ee" stroke-width="1.300"/></svg>
<svg style="left:408px;top:82px;width:12px;height:12px" viewBox="0 0 12 12"><path d="M1.500 0.500q3 2 3.300 6.500l-1.800 0.600Q0 4 1.500 0.500z" fill="#6ea8ee"/><path d="M11 2q-3 1-4 5.800l1.800 0.800Q11.500 6 11 2z" fill="#6ea8ee"/><circle cx="4.600" cy="9" r="0.900" fill="#6ea8ee"/><circle cx="6.500" cy="10.800" r="0.900" fill="#6ea8ee"/></svg>
<svg style="left:548px;top:42px;width:14px;height:13px" viewBox="0 0 14 13"><rect x="0.500" y="3" width="3.500" height="6" fill="#6ea8ee"/><rect x="3" y="1" width="3.500" height="5" fill="#9db7d9"/><rect x="4.500" y="0" width="2.500" height="3" fill="#6ea8ee"/><path d="M6.500 12l6-8" stroke="#f2e24a" stroke-width="2.200"/><path d="M6.500 12l-1 1" stroke="#ddd" stroke-width="1.200"/></svg>
<svg style="left:548px;top:63px;width:14px;height:11px" viewBox="0 0 14 11"><path d="M0.500 5v5M0.500 7.500h13" stroke="#f0f0f0" stroke-width="1.100"/><path d="M0.500 7.500l2.500-1.200v2.400z" fill="#f0f0f0"/><path d="M8 0.500l2.500 4.500h-5z" fill="#e8a05a"/><path d="M5 6h6" stroke="#f0f0f0" stroke-width="0.900"/></svg>
<svg style="left:548.5px;top:82px;width:12px;height:12px" viewBox="0 0 12 12"><path d="M4 0h4v4h4v4h-4v4h-4v-4h-4v-4h4z" fill="#eef4fc"/><path d="M4.800 0.800h2.400v4h4v2.400h-4v4h-2.400v-4h-4v-2.400h4z" fill="#6ea8ee"/><path d="M6 1.500v9M1.500 6h9" stroke="#dce9fa" stroke-width="0.800" stroke-dasharray="1.500 1"/></svg>
<svg style="left:646.5px;top:43px;width:8.5px;height:12px" viewBox="0 0 8.5 12"><path d="M4.250 0Q8 2 8.300 7H0.200Q0.500 2 4.250 0z" fill="#f6cfb2"/><path d="M4.250 7v4.500M2 11.500h4.500" stroke="#111" stroke-width="1.100"/></svg>
<svg style="left:646.5px;top:62.5px;width:8.5px;height:12px" viewBox="0 0 8.5 12"><path d="M4.250 0Q8 2 8.300 7H0.200Q0.500 2 4.250 0z" fill="#ffe93a"/><path d="M4.250 7v4.500M2 11.500h4.500" stroke="#111" stroke-width="1.100"/></svg>
<svg style="left:644px;top:82px;width:13px;height:12px" viewBox="0 0 13 12"><rect x="0.500" y="2.500" width="3.500" height="6" fill="#6ea8ee"/><rect x="2.500" y="1" width="3.500" height="5" fill="#9db7d9"/><rect x="4" y="0" width="2.500" height="7" fill="#6ea8ee"/><path d="M6.500 6.500h3v3h2.500v2.500h-3v-2.500h-2.500z" fill="#f0a65a"/><rect x="9.800" y="10" width="1.600" height="1.400" fill="#5c5c5c"/></svg>
<svg style="left:784px;top:42px;width:13px;height:13px" viewBox="0 0 13 13"><path d="M0 13L13 0v8l-5 5z" fill="#8fbdf0"/><path d="M2 12.500l10.500-10.500" stroke="#e6f0fc" stroke-width="0.900" stroke-dasharray="2 1.500"/><path d="M1.500 2l5 5M9 8.500l3.500 3.500M1.500 6l4-4" stroke="#e8a868" stroke-width="1"/></svg>
<svg style="left:784px;top:62px;width:13px;height:13px" viewBox="0 0 13 13"><path d="M0 13L13 0v8l-5 5z" fill="#8fbdf0"/><path d="M2 12.500l10.500-10.500" stroke="#e6f0fc" stroke-width="0.900" stroke-dasharray="2 1.500"/><path d="M3 3l8 8" stroke="#1a1a1a" stroke-width="1.200"/><path d="M1 6.500l3.500-2v3.500zM7.500 1.500l-3 2.500h3.500z" fill="#e8a868"/></svg>
<svg style="left:784px;top:81.5px;width:13px;height:13px" viewBox="0 0 13 13"><path d="M0.500 2v9.500q0 1 1 1h2M12.500 11v-9.500q0-1-1-1h-2" fill="none" stroke="#6ea8ee" stroke-width="1.100"/><path d="M3.500 3.500h6M3.500 6.500h6M3.500 9.500h6" stroke="#e4eefb" stroke-width="1.100"/><path d="M9 2l2 1.500-2 1.500zM4 5l-2 1.500 2 1.500zM9 8l2 1.500-2 1.500z" fill="#e8a05a"/></svg>
<svg style="left:897.4px;top:47.5px;width:23px;height:23.5px" viewBox="0 0 23 23.5"><path d="M2.200 1v21.500M1.200 21.500H23" stroke="#6ea8ee" stroke-width="1.800" fill="none"/><path d="M0.700 7h3M0.700 12h3M0.700 17h3" stroke="#6ea8ee" stroke-width="1"/><rect x="6.6" y="0.6000000000000001" width="2" height="2.800" fill="#f0b686"/><rect x="6.6" y="7.1" width="2" height="2.800" fill="#f0b686"/><rect x="6.6" y="13.6" width="2" height="2.800" fill="#f0b686"/><rect x="6.6" y="20.1" width="2" height="2.800" fill="#f0b686"/><rect x="12.5" y="0.6000000000000001" width="2" height="2.800" fill="#f0b686"/><rect x="12.5" y="7.1" width="2" height="2.800" fill="#f0b686"/><rect x="12.5" y="13.6" width="2" height="2.800" fill="#f0b686"/><rect x="12.5" y="20.1" width="2" height="2.800" fill="#f0b686"/><rect x="18" y="0.6000000000000001" width="2" height="2.800" fill="#f0b686"/><rect x="18" y="7.1" width="2" height="2.800" fill="#f0b686"/><rect x="18" y="13.6" width="2" height="2.800" fill="#f0b686"/><rect x="18" y="20.1" width="2" height="2.800" fill="#f0b686"/></svg>
<svg style="left:946px;top:47px;width:22px;height:25px" viewBox="0 0 22 25"><rect x="6" y="0" width="3.800" height="24" fill="#6ea8ee"/><path d="M1 4.300h20.500" stroke="#6ea8ee" stroke-width="1.600"/><path d="M4.500 23.800h7" stroke="#6ea8ee" stroke-width="1.600"/><path d="M7 3h1.800M7 6.500h1.800M7 9.500h1.800M7 12.500h1.800M7 15.500h1.800M7 18.500h1.800M7 21h1.800" stroke="#a9cdf6" stroke-width="0.800"/><path d="M17.300 5v5q0 2-1.800 2.200-1.500 0-1.500 1.300 0.300 1.300 2.300 0.800" fill="none" stroke="#9fb8d6" stroke-width="1.100"/></svg>
<svg style="left:1026px;top:42px;width:9px;height:13.5px" viewBox="0 0 9 13.5"><rect x="0" y="0" width="8.500" height="13.500" fill="#6ea8ee"/><path d="M1 2.500h3M3 5h4.500M3 7.500h4.500M3 10.500h4.500" stroke="#e6f0fc" stroke-width="1"/></svg>
<svg style="left:1024px;top:62px;width:13px;height:12px" viewBox="0 0 13 12"><rect x="0" y="1" width="4.200" height="11" fill="#6ea8ee"/><rect x="1" y="2.500" width="2.200" height="2" fill="#f5f3c0"/><rect x="1" y="6" width="2.200" height="3.500" fill="#f5f3c0"/><path d="M3 1.600h6" stroke="#9cc4f3" stroke-width="1.200"/><path d="M9.500 3v6" stroke="#f0a65a" stroke-width="1.200"/><circle cx="9.500" cy="2.800" r="2" fill="none" stroke="#f0a65a" stroke-width="1"/><circle cx="9.500" cy="10" r="2.100" fill="#f0a65a"/></svg>
<svg style="left:1024px;top:81.5px;width:13px;height:12.5px" viewBox="0 0 13 12.5"><rect x="0" y="1" width="4.200" height="11" fill="#6ea8ee"/><rect x="1" y="2.500" width="2.200" height="2" fill="#f5f3c0"/><rect x="1" y="6" width="2.200" height="4" fill="#f5f3c0"/><path d="M2 0.700h6" stroke="#9cc4f3" stroke-width="1.200"/><rect x="6" y="3" width="6.800" height="9.500" fill="#6ea8ee"/><rect x="7.200" y="4" width="1.300" height="7.500" fill="#e6f0fc"/><rect x="10.300" y="4" width="1.300" height="7.500" fill="#e6f0fc"/></svg>
<svg style="left:1055px;top:42.5px;width:13px;height:12.5px" viewBox="0 0 13 12.5"><rect x="0.500" y="1" width="3.800" height="10.500" fill="#6ea8ee"/><rect x="1.300" y="2.500" width="2.200" height="2" fill="#f5f3c0"/><rect x="1.300" y="6" width="2.200" height="4" fill="#f5f3c0"/><path d="M1 1.200h7.500" stroke="#9cc4f3" stroke-width="1.400"/><path d="M6.500 6.500h6.300l-0.800 5H7.300z" fill="#6ea8ee"/><rect x="8" y="7.500" width="3.300" height="2.500" fill="#f5f3c0"/><path d="M8 6.500q1.600-3 3.200 0" fill="none" stroke="#f5f3c0" stroke-width="0.900"/></svg>
<svg style="left:1055.5px;top:62px;width:13px;height:12.5px" viewBox="0 0 13 12.5"><rect x="0.500" y="1" width="3.800" height="11" fill="#6ea8ee"/><rect x="1.300" y="2.500" width="2.200" height="2" fill="#f5f3c0"/><rect x="1.300" y="6" width="2.200" height="4" fill="#f5f3c0"/><path d="M1 1.200h7" stroke="#9cc4f3" stroke-width="1.400"/><path d="M6.500 5h6v7.500h-6z" fill="#6ea8ee"/><path d="M6 4.500h7M8.500 3.500h2" stroke="#9cc4f3" stroke-width="1"/><rect x="8.200" y="6.500" width="2.600" height="4" fill="#e6f0fc"/></svg>
<svg style="left:1055px;top:81.5px;width:13.5px;height:13.5px" viewBox="0 0 13.5 13.5"><rect x="0.500" y="0.500" width="12.500" height="12.500" fill="#3a3a3a" stroke="#6ea8ee" stroke-width="1"/><path d="M0.500 6.800h12.500M7.800 0.500v12.500" stroke="#6ea8ee" stroke-width="1"/><rect x="1.800" y="2" width="4.700" height="3.500" fill="#f0a65a"/><rect x="1.800" y="8" width="4.700" height="3.800" fill="#f0a65a"/><rect x="9" y="2.500" width="2.800" height="2.500" fill="#111"/><rect x="9" y="8.500" width="2.800" height="2.500" fill="#111"/></svg>
<svg style="left:1094px;top:46.5px;width:27px;height:27px" viewBox="0 0 27 27"><rect x="0.500" y="0.500" width="17.500" height="21.500" fill="none" stroke="#7fb0ee" stroke-width="1"/><rect x="0" y="0" width="18.500" height="2.800" fill="#8cbaf0"/><rect x="2.300" y="5.200" width="6" height="7.300" fill="#7fb0ee"/><circle cx="18.300" cy="18" r="8.600" fill="#5c5c5c"/><g transform="translate(18.300 18)"><path d="M7.76 -1.49 L7.76 1.49 L5.80 1.54 L5.19 3.01L6.54 4.43 L4.43 6.54 L3.01 5.19 L1.54 5.80L1.49 7.76 L-1.49 7.76 L-1.54 5.80 L-3.01 5.19L-4.43 6.54 L-6.54 4.43 L-5.19 3.01 L-5.80 1.54L-7.76 1.49 L-7.76 -1.49 L-5.80 -1.54 L-5.19 -3.01L-6.54 -4.43 L-4.43 -6.54 L-3.01 -5.19 L-1.54 -5.80L-1.49 -7.76 L1.49 -7.76 L1.54 -5.80 L3.01 -5.19L4.43 -6.54 L6.54 -4.43 L5.19 -3.01 L5.80 -1.54z" fill="#dcdcdc"/><circle r="2.600" fill="#3c3c3c"/></g></svg>
<svg style="left:285px;top:123px;width:6px;height:8px" viewBox="0 0 6 8"><path d="M1.500 0.500h3v4h-3z" fill="none" stroke="#f4f4f4" stroke-width="1"/><path d="M3.800 0.500v4" stroke="#f4f4f4" stroke-width="1.200"/><path d="M0 5h6M3 5v3" stroke="#f4f4f4" stroke-width="1"/></svg>
<svg style="left:298px;top:123px;width:7px;height:7px" viewBox="0 0 7 7"><path d="M0.500 0.500l6 6M6.500 0.500l-6 6" stroke="#f8f8f8" stroke-width="1.200"/></svg>
<svg style="left:9px;top:142px;width:13px;height:11px" viewBox="0 0 13 11"><path d="M0.500 1h4l1 1.500h5v2h-10z" fill="#e3b93c"/><path d="M0.500 10V3.500h1.500l0.800-1h8.700v7.500z" fill="#f6d458"/><path d="M2.500 5h10l-1.800 5H0.500z" fill="#fbe58a"/></svg>
<svg style="left:31px;top:141px;width:12px;height:12px" viewBox="0 0 12 12"><circle cx="4.500" cy="4.500" r="4" fill="#d4d4d4" stroke="#bdbdbd" stroke-width="0.800"/><circle cx="3.800" cy="3.600" r="1.800" fill="#ececec"/><path d="M7.200 7.200l4 4.200" stroke="#bcbcbc" stroke-width="2"/></svg>
<svg style="left:50px;top:144px;width:12px;height:9px" viewBox="0 0 12 9"><path d="M0.500 4.300Q5.800-1.500 11 4.300 5.800 9.500 0.500 4.300z" fill="#f6f6f6" stroke="#2a2a2a" stroke-width="0.900"/><circle cx="5.800" cy="4" r="2.100" fill="#666"/><circle cx="5.800" cy="4" r="0.900" fill="#111"/></svg>
<svg style="left:68px;top:144px;width:12px;height:9px" viewBox="0 0 12 9"><path d="M0.500 4.300Q5.800-1.500 11 4.300 5.800 9.500 0.500 4.300z" fill="#f6f6f6" stroke="#2a2a2a" stroke-width="0.900"/><circle cx="5.800" cy="4" r="2.100" fill="#666"/><circle cx="5.800" cy="4" r="0.900" fill="#111"/></svg>
<div style="left:77px;top:149px;width:1.5px;height:4px;background:#111;"></div>
<svg style="left:184px;top:142px;width:10px;height:11px" viewBox="0 0 10 11"><path d="M1.500 1h7M1.500 8h7M1.500 10.500h7" stroke="#5b9be8" stroke-width="1.300"/><path d="M0.500 6l4.500-2.500 4.500 2.500" stroke="#3f6fae" stroke-width="1.100" fill="none"/></svg>
<svg style="left:204.5px;top:142px;width:13.5px;height:11.5px" viewBox="0 0 13.5 11.5"><rect x="0.500" y="0.500" width="7.500" height="8" fill="#a9c4e6" stroke="#3f6fae"/><rect x="1.500" y="3" width="5.500" height="1.800" fill="#f3e04a"/><path d="M8 3.500l3.500 3.500M11.800 4v3.500H8.500" stroke="#3faa4a" stroke-width="1.500" fill="none"/><rect x="4.500" y="8.500" width="8" height="2.500" fill="#e8eef8" stroke="#3f6fae" stroke-width="0.800"/></svg>
<svg style="left:222.5px;top:142px;width:13px;height:11.5px" viewBox="0 0 13 11.5"><rect x="0.500" y="0.500" width="7.500" height="8" fill="#9a9a9a" stroke="#c4c4c4"/><path d="M1.500 3h5.500M1.500 5h5.500" stroke="#c4c4c4" stroke-width="0.800"/><path d="M8 4.500q3.500 0 4 4" stroke="#c8c8c8" stroke-width="1.300" fill="none"/><rect x="5" y="8.500" width="7.500" height="2.500" fill="#d4d4d4"/></svg>
<svg style="left:243.5px;top:140.5px;width:13.5px;height:13.5px" viewBox="0 0 13.5 13.5"><path d="M0.500 0.800h10" stroke="#7fb8e8" stroke-width="1.400"/><rect x="1" y="3" width="9" height="10" fill="#e8f0fa" stroke="#3f6fae" stroke-width="1"/><rect x="2" y="4" width="2.500" height="8" fill="#6ea8ee"/><circle cx="9" cy="9" r="3.600" fill="#8a8a8a" stroke="#d8d8d8" stroke-width="1.200"/><circle cx="9" cy="9" r="1.300" fill="#e8e8e8"/></svg>
<svg style="left:1114px;top:862px;width:13px;height:11px" viewBox="0 0 13 11"><rect x="0.500" y="5.500" width="5.500" height="5" fill="none" stroke="#e4e4e4" stroke-width="1"/><path d="M1.500 5.500v-1.500q0-1.500 1.700-1.500 1.700 0 1.700 1.500" fill="none" stroke="#e4e4e4" stroke-width="1"/><rect x="6.500" y="3" width="5.500" height="4.500" fill="#e4e4e4"/><path d="M8 3v-1q0-1.500 1.600-1.500 1.600 0 1.600 1.500" fill="none" stroke="#e4e4e4" stroke-width="1"/><rect x="8.500" y="4.500" width="1.500" height="1.500" fill="#555"/></svg>
<svg style="left:1131.5px;top:862px;width:11px;height:12px" viewBox="0 0 11 12"><rect x="0" y="0" width="10" height="8.500" fill="#f0f0f0"/><rect x="1" y="1" width="8" height="6.500" fill="#d8d8d8"/><path d="M4.500 8.500l2.500 3 2.500-3" fill="none" stroke="#f4f4f4" stroke-width="1.300"/></svg>
<svg style="left:1222px;top:860.5px;width:15px;height:14px" viewBox="0 0 15 14"><path d="M1 12.500V9M1 12.500h4M13.500 1.500v4M13.500 1.500h-4" stroke="#b8c4d4" stroke-width="1" fill="none"/><path d="M3.500 0.500q3 0 3 3 0 1.500-1.200 2.500v1.500h-3.600v-1.500Q0.500 5 0.500 3.500q0-3 3-3z" fill="#f7edb0"/><rect x="2" y="7.500" width="3" height="1.500" fill="#c8c8c8"/><path d="M8 5.500l5.500 5-2.300 0.300 1.300 2.700-1.300 0.500-1.200-2.700-2 1.500z" fill="#fff" stroke="#222" stroke-width="0.700"/></svg>
<svg style="left:1241.5px;top:861px;width:9px;height:13px" viewBox="0 0 9 13"><path d="M4.500 0q4.500 0 4.500 4.500 0 2-2 4v1.500h-5v-1.500q-2-2-2-4Q0 0 4.500 0z" fill="#e6e6e6"/><path d="M2.500 10.800h4M3 12.200h3" stroke="#bdbdbd" stroke-width="1.100"/><path d="M2.500 2q1-1.200 2.500-1.200" stroke="#fff" stroke-width="1" fill="none"/></svg>
<svg style="left:1264.5px;top:861.5px;width:12px;height:12px" viewBox="0 0 12 12"><path d="M4.500 2l4.500 5.500-2 0.200 1 2.300-1.100 0.400-1-2.300-1.500 1.200z" fill="#fff" stroke="#333" stroke-width="0.500"/><circle cx="6" cy="6" r="5" fill="none" stroke="#d8303a" stroke-width="1.500"/><path d="M2.500 2.500l7 7" stroke="#d8303a" stroke-width="1.500"/></svg>
<svg style="left:1286px;top:860px;width:15px;height:14px" viewBox="0 0 15 14"><path d="M3.700 1v11.500h10.500" fill="none" stroke="#f0f0f0" stroke-width="1"/><path d="M3.700 0l-2 3h4zM15 12.500l-3-1.800v3.600z" fill="#f0f0f0"/><path d="M10 1.500l-2.500 4.500h2l-1.500 4 4-5.500h-2l1.500-3z" fill="#f4f4f4"/></svg>
<svg style="left:1383px;top:861px;width:12.5px;height:12.5px" viewBox="0 0 12.5 12.5"><path d="M3.500 12.500Q1 9.500 0.500 6.800q0.800-1 1.800 0l0.900 1.500V2.200q0.800-1.200 1.600 0V1q0.900-1.300 1.800 0v1q0.900-1.100 1.800 0v1.500q0.900-0.800 1.700 0.200v5q0 2-1.600 3.800z" fill="#fafafa"/><path d="M4.800 2.500v4M6.600 2v4.500M8.400 3v3.500" stroke="#888" stroke-width="0.500"/></svg>
<svg style="left:1408px;top:862px;width:12.5px;height:12px" viewBox="0 0 12.5 12"><circle cx="4.800" cy="4.800" r="4.200" fill="#dbeefb" stroke="#f4f8fc" stroke-width="1"/><path d="M8 8l4 3.800" stroke="#4f8fde" stroke-width="2"/></svg>
<div style="left:1431px;top:860.5px;width:13.5px;height:13.5px;background:#6ea8ee;"></div>
<svg style="left:1432.5px;top:862px;width:11px;height:11px" viewBox="0 0 11 11"><circle cx="4.500" cy="4.500" r="3.600" fill="#9cc6f6" stroke="#2f3f55" stroke-width="1.100"/><path d="M7 7l3.500 3.500" stroke="#2f3f55" stroke-width="1.400"/></svg>
<svg style="left:1454px;top:860.5px;width:14px;height:14px" viewBox="0 0 14 14"><path d="M0.500 10.500V0.500h10v4" fill="none" stroke="#7fb0ee" stroke-width="1.100"/><path d="M0 0.500h11" stroke="#7fb0ee" stroke-width="1.600"/><path d="M0.500 10.500h4" stroke="#7fb0ee" stroke-width="1.100"/><circle cx="8.500" cy="8.500" r="3" fill="#5a5a5a" stroke="#e0e0e0" stroke-width="1"/><path d="M10.700 10.700l2.800 2.800" stroke="#e0e0e0" stroke-width="1.300"/></svg>
<svg style="left:1478px;top:861px;width:14px;height:13px" viewBox="0 0 14 13"><ellipse cx="6.800" cy="6.500" rx="6.200" ry="3" fill="none" stroke="#c4c4c4" stroke-width="1.100"/><path d="M6.800 0v13" stroke="#c4c4c4" stroke-width="1.100"/><path d="M10 10.500l2.500-0.500-1.500-1.800" fill="none" stroke="#c4c4c4" stroke-width="0.900"/></svg>
<svg style="left:1502px;top:862px;width:12px;height:11.5px" viewBox="0 0 12 11.5"><path d="M1.800 6.500A4.300 4.300 0 0 1 9 3" fill="none" stroke="#9be060" stroke-width="1.900"/><path d="M10.200 5A4.300 4.300 0 0 1 3 8.500" fill="none" stroke="#9be060" stroke-width="1.900"/><path d="M7.500 0.500l3.500 2.200-3.200 2.300zM4.500 11l-3.500-2.200 3.200-2.300z" fill="#9be060"/></svg>
<svg style="left:1519px;top:861px;width:13.5px;height:12.5px" viewBox="0 0 13.5 12.5"><path d="M0.500 8V0.500h8.500v2" fill="none" stroke="#e8e8e8" stroke-width="1.100"/><path d="M0 0.800h9.500" stroke="#e8e8e8" stroke-width="1.600"/><path d="M0.500 8h3" stroke="#e8e8e8" stroke-width="1.100"/><rect x="5.500" y="6.500" width="7.500" height="5.500" fill="#e8e8e8"/><path d="M7 6.500v-1q0-2 2.200-2 2.300 0 2.300 2v1" fill="none" stroke="#e8e8e8" stroke-width="1.100"/></svg>
<svg style="left:1542.5px;top:861px;width:13.5px;height:12.5px" viewBox="0 0 13.5 12.5"><rect x="2" y="2" width="9.500" height="8.500" fill="#2aa3e6"/><path d="M0.500 3.500v-3h3M10 0.500h3v3M13 9v3h-3M3.500 12h-3v-3" fill="none" stroke="#e8eef6" stroke-width="1"/></svg>
<div style="left:385px;top:139px;width:629px;height:523px;background:#f0f0f0;border-radius:6px;box-shadow:0 0 0 1px rgba(28,28,28,.5),0 2px 9px rgba(0,0,0,.35);overflow:hidden;"><div style="left:0;top:0;width:629px;height:25px;background:#f3f3f3"></div><div style="left:0;top:25px;width:629px;height:15px;background:#ffffff"></div></div>
<svg style="left:393px;top:145px;width:12px;height:12px" viewBox="0 0 12 12"><defs><linearGradient id="dg" x1="0" y1="0" x2="0" y2="1"><stop offset="0" stop-color="#3cc0ea"/><stop offset="1" stop-color="#2f83cf"/></linearGradient></defs><rect x="0" y="0" width="12" height="12" rx="2.500" fill="url(#dg)"/><path d="M3.300 1h5.400v3q0 2.300-2.700 2.800Q3.300 6.300 3.300 4z" fill="#f4fbff"/><path d="M6 6.500v1.500" stroke="#f4fbff" stroke-width="1.200"/><path d="M7.600 8.300q0.800 2.700-1.600 2.700-2.200 0-1.800-2" stroke="#f4fbff" stroke-width="1.300" fill="none"/></svg>
<span class="t" style="left:410.00px;top:145.00px;font-size:9.7px;line-height:13px;color:#1b1b1b;transform:scaleX(0.9665);transform-origin:0 50%;">Складская площадка 3</span>
<svg style="left:912px;top:143px;width:96px;height:16px" viewBox="912 143 96 16"><path d="M917 151.500h8.500" stroke="#c6c6c6"/><rect x="953.900" y="147.400" width="7.600" height="7.300" rx="0.800" fill="none" stroke="#1a1a1a" stroke-width="0.900"/><path d="M991 147.200l8 7.600M999 147.200l-8 7.600" stroke="#1a1a1a" stroke-width="0.900"/></svg>
<span class="t" style="left:391.80px;top:165.50px;font-size:10px;line-height:13px;color:#1b1b1b;transform:scaleX(0.8843);transform-origin:0 50%;">Вид</span>
<span class="t" style="left:419.00px;top:165.50px;font-size:10px;line-height:13px;color:#1b1b1b;transform:scaleX(0.9120);transform-origin:0 50%;">Вставка</span>
<span class="t" style="left:464.60px;top:165.50px;font-size:10px;line-height:13px;color:#1b1b1b;transform:scaleX(0.9820);transform-origin:0 50%;">Конструкция</span>
<span class="t" style="left:533.60px;top:165.50px;font-size:10px;line-height:13px;color:#1b1b1b;transform:scaleX(0.9793);transform-origin:0 50%;">Контур</span>
<span class="t" style="left:576.40px;top:165.50px;font-size:10px;line-height:13px;color:#1b1b1b;transform:scaleX(1.0382);transform-origin:0 50%;">Помощь</span>
<div style="left:393px;top:188px;width:197px;height:442px;background:#ffffff;border:1px solid #9a9a9a;box-sizing:border-box;"></div>
<span class="t" style="left:397.70px;top:193.00px;font-size:9.4px;line-height:12px;color:#222;transform:scaleX(0.9526);transform-origin:0 50%;">Параметр</span>
<span class="t" style="left:546.70px;top:193.00px;font-size:9.4px;line-height:12px;color:#222;transform:scaleX(0.9246);transform-origin:0 50%;">Значен...</span>
<div style="left:542px;top:190px;width:1px;height:18px;background:#e4e4e4;"></div>
<div style="left:395px;top:210px;width:193px;height:12px;background:#f0f0f0;border-bottom:1px solid #d8d8d8;"></div>
<svg style="left:397px;top:211.2px;width:9px;height:9px" viewBox="0 0 9 9"><rect x="0.500" y="0.500" width="7" height="7" fill="#fff" stroke="#8c8c8c"/><path d="M2 4h4" stroke="#333"/></svg>
<span class="t" style="left:409.00px;top:209.22px;font-size:9.4px;line-height:12px;color:#111;font-weight:700;transform:scaleX(0.9887);transform-origin:0 50%;">Основные</span>
<div style="left:395px;top:236px;width:193px;height:1px;background:#e2e2e2;"></div>
<div style="left:542px;top:223px;width:1px;height:14px;background:#e2e2e2;"></div>
<span class="t" style="left:408.80px;top:223.55px;font-size:9.4px;line-height:12px;color:#1b1b1b;transform:scaleX(0.8212);transform-origin:0 50%;">Имя</span>
<span class="t" style="left:544.50px;top:223.55px;font-size:9.4px;line-height:12px;color:#1b1b1b;transform:scaleX(0.9838);transform-origin:0 50%;">Складс...</span>
<div style="left:395px;top:250px;width:193px;height:1px;background:#e2e2e2;"></div>
<div style="left:542px;top:237px;width:1px;height:14px;background:#e2e2e2;"></div>
<span class="t" style="left:408.80px;top:237.38px;font-size:9.4px;line-height:12px;color:#1b1b1b;transform:scaleX(0.8951);transform-origin:0 50%;">Тип</span>
<span class="t" style="left:544.50px;top:237.38px;font-size:9.4px;line-height:12px;color:#9a9a9a;transform:scaleX(0.9838);transform-origin:0 50%;">Складс...</span>
<div style="left:395px;top:251px;width:193px;height:13px;background:#f0f0f0;border-bottom:1px solid #d8d8d8;"></div>
<svg style="left:397px;top:252.2px;width:9px;height:9px" viewBox="0 0 9 9"><rect x="0.500" y="0.500" width="7" height="7" fill="#fff" stroke="#8c8c8c"/><path d="M2 4h4" stroke="#333"/></svg>
<span class="t" style="left:409.00px;top:250.71px;font-size:9.4px;line-height:12px;color:#111;font-weight:700;">Обозначение</span>
<div style="left:395px;top:278px;width:193px;height:1px;background:#e2e2e2;"></div>
<div style="left:542px;top:265px;width:1px;height:14px;background:#e2e2e2;"></div>
<span class="t" style="left:408.80px;top:265.04px;font-size:9.4px;line-height:12px;color:#1b1b1b;transform:scaleX(0.9520);transform-origin:0 50%;">Тип представления</span>
<span class="t" style="left:544.50px;top:265.04px;font-size:9.4px;line-height:12px;color:#1b1b1b;transform:scaleX(1.0165);transform-origin:0 50%;">Текст</span>
<div style="left:395px;top:279px;width:193px;height:12px;background:#f0f0f0;border-bottom:1px solid #d8d8d8;"></div>
<svg style="left:397px;top:280.2px;width:9px;height:9px" viewBox="0 0 9 9"><rect x="0.500" y="0.500" width="7" height="7" fill="#fff" stroke="#8c8c8c"/><path d="M2 4h4" stroke="#333"/></svg>
<span class="t" style="left:409.00px;top:278.37px;font-size:9.4px;line-height:12px;color:#111;font-weight:700;transform:scaleX(1.0519);transform-origin:0 50%;">Проект</span>
<div style="left:395px;top:305px;width:193px;height:1px;background:#e2e2e2;"></div>
<div style="left:542px;top:292px;width:1px;height:14px;background:#e2e2e2;"></div>
<span class="t" style="left:408.80px;top:292.70px;font-size:9.4px;line-height:12px;color:#1b1b1b;transform:scaleX(0.9561);transform-origin:0 50%;">Строительная площадка</span>
<div style="left:395px;top:319px;width:193px;height:1px;background:#e2e2e2;"></div>
<div style="left:542px;top:306px;width:1px;height:14px;background:#e2e2e2;"></div>
<span class="t" style="left:408.80px;top:306.53px;font-size:9.4px;line-height:12px;color:#1b1b1b;transform:scaleX(0.8663);transform-origin:0 50%;">Номер</span>
<span class="t" style="left:544.50px;top:306.53px;font-size:9.4px;line-height:12px;color:#1b1b1b;transform:scaleX(1.0500);transform-origin:0 50%;">3</span>
<div style="left:395px;top:333px;width:193px;height:1px;background:#e2e2e2;"></div>
<div style="left:542px;top:320px;width:1px;height:14px;background:#e2e2e2;"></div>
<span class="t" style="left:408.80px;top:320.36px;font-size:9.4px;line-height:12px;color:#1b1b1b;transform:scaleX(0.9665);transform-origin:0 50%;">Включать в экспликацию</span>
<div style="left:544px;top:321px;width:10px;height:10px;background:#fff;border:1px solid #b8b8b8;box-sizing:border-box;"></div>
<svg style="left:545px;top:322px;width:8px;height:8px" viewBox="0 0 8 8"><path d="M1 4l2 2.500 4-5" stroke="#111" stroke-width="1.500" fill="none"/></svg>
<span class="t" style="left:557.00px;top:320.36px;font-size:9.4px;line-height:12px;color:#1b1b1b;transform:scaleX(1.0364);transform-origin:0 50%;">Да</span>
<div style="left:395px;top:334px;width:193px;height:13px;background:#f0f0f0;border-bottom:1px solid #d8d8d8;"></div>
<svg style="left:397px;top:335.2px;width:9px;height:9px" viewBox="0 0 9 9"><rect x="0.500" y="0.500" width="7" height="7" fill="#fff" stroke="#8c8c8c"/><path d="M2 4h4" stroke="#333"/></svg>
<span class="t" style="left:409.00px;top:333.69px;font-size:9.4px;line-height:12px;color:#111;font-weight:700;">Графика</span>
<div style="left:395px;top:361px;width:193px;height:1px;background:#e2e2e2;"></div>
<div style="left:542px;top:348px;width:1px;height:14px;background:#e2e2e2;"></div>
<span class="t" style="left:408.80px;top:348.02px;font-size:9.4px;line-height:12px;color:#1b1b1b;transform:scaleX(0.9824);transform-origin:0 50%;">Штриховка</span>
<span class="t" style="left:544.50px;top:348.02px;font-size:9.4px;line-height:12px;color:#1b1b1b;">Нет</span>
<div style="left:395px;top:374px;width:193px;height:1px;background:#e2e2e2;"></div>
<div style="left:542px;top:362px;width:1px;height:13px;background:#e2e2e2;"></div>
<span class="t" style="left:408.80px;top:361.85px;font-size:9.4px;line-height:12px;color:#1b1b1b;transform:scaleX(0.9543);transform-origin:0 50%;">Перекрывать примитивы</span>
<div style="left:544px;top:363px;width:10px;height:10px;background:#fff;border:1px solid #b8b8b8;box-sizing:border-box;"></div>
<span class="t" style="left:557.00px;top:361.85px;font-size:9.4px;line-height:12px;color:#1b1b1b;">Нет</span>
<div style="left:395px;top:388px;width:193px;height:1px;background:#e2e2e2;"></div>
<div style="left:542px;top:375px;width:1px;height:14px;background:#e2e2e2;"></div>
<span class="t" style="left:408.80px;top:375.68px;font-size:9.4px;line-height:12px;color:#9a9a9a;transform:scaleX(0.9489);transform-origin:0 50%;">Отображать размеры</span>
<div style="left:544px;top:376px;width:10px;height:10px;background:#fff;border:1px solid #b8b8b8;box-sizing:border-box;"></div>
<span class="t" style="left:557.00px;top:375.68px;font-size:9.4px;line-height:12px;color:#9a9a9a;">Нет</span>
<div style="left:395px;top:389px;width:193px;height:13px;background:#f0f0f0;border-bottom:1px solid #d8d8d8;"></div>
<svg style="left:397px;top:390.2px;width:9px;height:9px" viewBox="0 0 9 9"><rect x="0.500" y="0.500" width="7" height="7" fill="#fff" stroke="#8c8c8c"/><path d="M2 4h4" stroke="#333"/></svg>
<span class="t" style="left:409.00px;top:389.00px;font-size:9.4px;line-height:12px;color:#111;font-weight:700;transform:scaleX(1.0216);transform-origin:0 50%;">Геометрия</span>
<div style="left:395px;top:416px;width:193px;height:1px;background:#e2e2e2;"></div>
<div style="left:542px;top:403px;width:1px;height:14px;background:#e2e2e2;"></div>
<span class="t" style="left:408.80px;top:403.34px;font-size:9.4px;line-height:12px;color:#3a7bd5;transform:scaleX(0.9205);transform-origin:0 50%;">Длина, м</span>
<span class="t" style="left:544.50px;top:403.34px;font-size:9.4px;line-height:12px;color:#3a7bd5;transform:scaleX(1.0592);transform-origin:0 50%;">&lt;Указа...</span>
<div style="left:395px;top:430px;width:193px;height:1px;background:#e2e2e2;"></div>
<div style="left:542px;top:417px;width:1px;height:14px;background:#e2e2e2;"></div>
<span class="t" style="left:408.80px;top:417.17px;font-size:9.4px;line-height:12px;color:#3a7bd5;transform:scaleX(0.9217);transform-origin:0 50%;">Ширина, м</span>
<span class="t" style="left:544.50px;top:417.17px;font-size:9.4px;line-height:12px;color:#3a7bd5;transform:scaleX(1.0592);transform-origin:0 50%;">&lt;Указа...</span>
<div style="left:395px;top:444px;width:193px;height:1px;background:#e2e2e2;"></div>
<div style="left:542px;top:431px;width:1px;height:14px;background:#e2e2e2;"></div>
<span class="t" style="left:408.80px;top:431.00px;font-size:9.4px;line-height:12px;color:#3a7bd5;transform:scaleX(0.9158);transform-origin:0 50%;">Периметр, м</span>
<span class="t" style="left:544.50px;top:431.00px;font-size:9.4px;line-height:12px;color:#8a8a8a;transform:scaleX(1.0500);transform-origin:0 50%;">0</span>
<div style="left:395px;top:457px;width:193px;height:1px;background:#e2e2e2;"></div>
<div style="left:542px;top:445px;width:1px;height:13px;background:#e2e2e2;"></div>
<span class="t" style="left:408.80px;top:444.83px;font-size:9.4px;line-height:12px;color:#3a7bd5;transform:scaleX(0.9476);transform-origin:0 50%;">Площадь проезжей части, м2</span>
<span class="t" style="left:544.50px;top:444.83px;font-size:9.4px;line-height:12px;color:#8a8a8a;transform:scaleX(1.0500);transform-origin:0 50%;">0</span>
<div style="left:395px;top:471px;width:193px;height:1px;background:#e2e2e2;"></div>
<div style="left:542px;top:458px;width:1px;height:14px;background:#e2e2e2;"></div>
<span class="t" style="left:408.80px;top:458.66px;font-size:9.4px;line-height:12px;color:#3a7bd5;transform:scaleX(0.9557);transform-origin:0 50%;">Непокрытая площадь, м2</span>
<span class="t" style="left:544.50px;top:458.66px;font-size:9.4px;line-height:12px;color:#3a7bd5;transform:scaleX(1.0500);transform-origin:0 50%;">0</span>
<div style="left:395px;top:472px;width:193px;height:13px;background:#f0f0f0;border-bottom:1px solid #d8d8d8;"></div>
<svg style="left:397px;top:473.2px;width:9px;height:9px" viewBox="0 0 9 9"><rect x="0.500" y="0.500" width="7" height="7" fill="#fff" stroke="#8c8c8c"/><path d="M2 4h4" stroke="#333"/></svg>
<span class="t" style="left:409.00px;top:471.99px;font-size:9.4px;line-height:12px;color:#111;font-weight:700;transform:scaleX(1.0442);transform-origin:0 50%;">Параметры раскладки</span>
<div style="left:395px;top:499px;width:193px;height:1px;background:#e2e2e2;"></div>
<div style="left:542px;top:486px;width:1px;height:14px;background:#e2e2e2;"></div>
<span class="t" style="left:408.80px;top:486.32px;font-size:9.4px;line-height:12px;color:#1b1b1b;transform:scaleX(0.9445);transform-origin:0 50%;">Коэффициент перекрытия</span>
<span class="t" style="left:544.50px;top:486.32px;font-size:9.4px;line-height:12px;color:#1b1b1b;transform:scaleX(0.9581);transform-origin:0 50%;">0.1</span>
<div style="left:395px;top:513px;width:193px;height:1px;background:#e2e2e2;"></div>
<div style="left:542px;top:500px;width:1px;height:14px;background:#e2e2e2;"></div>
<span class="t" style="left:408.80px;top:500.15px;font-size:9.4px;line-height:12px;color:#1b1b1b;transform:scaleX(0.9657);transform-origin:0 50%;">Этап строительства</span>
<span class="t" style="left:544.50px;top:500.15px;font-size:9.4px;line-height:12px;color:#1b1b1b;transform:scaleX(1.0500);transform-origin:0 50%;">1</span>
<div style="left:395px;top:527px;width:193px;height:1px;background:#e2e2e2;"></div>
<div style="left:542px;top:514px;width:1px;height:14px;background:#e2e2e2;"></div>
<span class="t" style="left:408.80px;top:513.97px;font-size:9.4px;line-height:12px;color:#1b1b1b;transform:scaleX(0.9465);transform-origin:0 50%;">Процент оборачиваемости 1, %</span>
<span class="t" style="left:544.50px;top:513.97px;font-size:9.4px;line-height:12px;color:#1b1b1b;transform:scaleX(1.0060);transform-origin:0 50%;">30</span>
<div style="left:395px;top:540px;width:193px;height:1px;background:#e2e2e2;"></div>
<div style="left:542px;top:528px;width:1px;height:13px;background:#e2e2e2;"></div>
<span class="t" style="left:408.80px;top:527.80px;font-size:9.4px;line-height:12px;color:#1b1b1b;transform:scaleX(0.9465);transform-origin:0 50%;">Процент оборачиваемости 2, %</span>
<span class="t" style="left:544.50px;top:527.80px;font-size:9.4px;line-height:12px;color:#1b1b1b;transform:scaleX(1.0500);transform-origin:0 50%;">5</span>
<svg style="left:396px;top:638px;width:12px;height:12px" viewBox="0 0 12 12"><circle cx="6" cy="6" r="5.400" fill="#c4e5f9" stroke="#4c9cda" stroke-width="0.900"/><text x="6" y="9.200" font-size="8.500" font-weight="700" text-anchor="middle" fill="#2b4c7e" font-family="Liberation Sans,sans-serif">?</text></svg>
<svg style="left:413.500px;top:637px;width:14px;height:14px" viewBox="0 0 14 14"><rect x="0.500" y="1.500" width="9" height="11" fill="#fbfcfe" stroke="#2f4f7a" stroke-width="0.900"/><rect x="0" y="0" width="10" height="2.200" fill="#5aa0e0"/><rect x="1.800" y="4" width="1.600" height="1.600" fill="#5aa0e0"/><circle cx="9.300" cy="9.500" r="3.900" fill="#9a9a9a" stroke="#5a5a5a" stroke-width="0.800"/><circle cx="9.300" cy="9.500" r="1.500" fill="#e8e8e8" stroke="#666" stroke-width="0.500"/></svg>
<svg style="left:433px;top:637.500px;width:12.500px;height:12.500px" viewBox="0 0 12.500 12.500"><rect x="0.500" y="0.500" width="11.500" height="11.500" fill="#e6ebf5" stroke="#3c5c9c" stroke-width="1"/><path d="M2.200 2.800h6.500M2.200 4.300h3" stroke="#26355a" stroke-width="1.200"/><circle cx="8" cy="8.300" r="2.600" fill="#fde8e8" stroke="#d83a3a" stroke-width="0.900"/><circle cx="8" cy="8.300" r="0.900" fill="#d83a3a"/></svg>
<span class="t" style="left:596.00px;top:187.00px;font-size:9.4px;line-height:12px;color:#1b1b1b;transform:scaleX(0.9610);transform-origin:0 50%;">Классификатор</span>
<span class="t" style="left:739.50px;top:187.00px;font-size:9.4px;line-height:12px;color:#1b1b1b;transform:scaleX(0.9617);transform-origin:0 50%;">Поиск:</span>
<div style="left:772px;top:186px;width:145px;height:14px;background:#ffffff;border-bottom:1px solid #8a8a8a;border-radius:2px;"></div>
<span class="t" style="left:939.00px;top:187.00px;font-size:9.4px;line-height:12px;color:#1b1b1b;transform:scaleX(0.9102);transform-origin:0 50%;">13</span>
<svg style="left:971px;top:186px;width:32px;height:13px" viewBox="971 186 32 13"><path d="M977 187.500l5.500 5.500h-3v4h-5v-4h-3z" fill="#777"/><path d="M996 197.500l5.500-5.500h-3v-4.500h-5v4.500h-3z" fill="#777"/></svg>
<div style="left:597px;top:203px;width:409px;height:184px;background:#ffffff;border-top:2px solid #8e8e8e;border-left:1px solid #9a9a9a;box-sizing:border-box;"></div>
<div style="left:992px;top:205px;width:13px;height:182px;background:#f0f0f0;"></div>
<div style="left:1005px;top:205px;width:1px;height:182px;background:#fbfbfb;"></div>
<div style="left:997.5px;top:295px;width:1.5px;height:36px;background:#7a7a7a;"></div>
<div style="left:598px;top:208px;width:393px;height:19px;background:#cccccc;border-radius:0 2px 2px 0;"></div>
<svg style="left:604px;top:214.500px;width:7px;height:7px" viewBox="0 0 7 7"><path d="M6.300 0.300V6.300H0.300z" fill="#222"/></svg>
<span class="t" style="left:613.50px;top:212.00px;font-size:9.4px;line-height:12px;color:#1b1b1b;transform:scaleX(0.9742);transform-origin:0 50%;">Склады</span>
<div style="left:598px;top:228px;width:96px;height:104.5px;background:linear-gradient(#deeefb,#c6e1f7);border:1px solid #8fc7f2;border-radius:3px;box-sizing:border-box;"></div>
<div style="left:605.5px;top:235px;width:81.5px;height:80.5px;background:#9e9e9e;"></div>
<svg style="left:634px;top:263px;width:26px;height:24px" viewBox="0 0 26 24"><path d="M6.500 1.500h16v9h-4M1.500 10.500h5v-9M1.500 10.500v11h10" fill="none" stroke="#3b5f95" stroke-width="1.400"/><path d="M9 12l8-3.500 7 3v7l-7.500 4-7.500-3.500z" fill="#d9534f"/><path d="M9 12l7.500 3 7.500-3.500-7-3z" fill="#f08a6c"/><path d="M16.500 15v7.500" stroke="#b03a36"/></svg>
<span class="t" style="left:599.59px;top:316.00px;font-size:9.4px;line-height:12px;color:#1b1b1b;transform:scaleX(0.9697);transform-origin:50% 50%;">Складская площадка</span>
<div style="left:598px;top:334px;width:393px;height:19px;background:#cccccc;border-radius:0 2px 2px 0;"></div>
<svg style="left:604px;top:340.500px;width:7px;height:7px" viewBox="0 0 7 7"><path d="M6.300 0.300V6.300H0.300z" fill="#222"/></svg>
<span class="t" style="left:613.50px;top:338.00px;font-size:9.4px;line-height:12px;color:#1b1b1b;transform:scaleX(0.9603);transform-origin:0 50%;">Подъем груза</span>
<div style="left:601px;top:361px;width:81px;height:25.5px;background:#9e9e9e;"></div>
<div style="left:691px;top:361px;width:81px;height:25.5px;background:#9e9e9e;"></div>
<div style="left:780px;top:361px;width:81px;height:25.5px;background:#9e9e9e;"></div>
<div style="left:868px;top:361px;width:81px;height:25.5px;background:#9e9e9e;"></div>
<span class="t" style="left:596.00px;top:393.00px;font-size:9.4px;line-height:12px;color:#1b1b1b;transform:scaleX(0.9369);transform-origin:0 50%;">Перечень материалов</span>
<div style="left:596px;top:408px;width:411px;height:122px;background:#ffffff;border:1px solid #adadad;border-left:2px solid #c6c6c6;box-sizing:border-box;overflow:hidden;"></div>
<div style="left:991px;top:409px;width:15px;height:120px;background:#f0f0f0;"></div>
<div style="left:997.5px;top:424px;width:1.5px;height:78px;background:#7a7a7a;"></div>
<div style="left:598px;top:441px;width:17px;height:88px;background:#f0f0f0;"></div>
<div style="left:615px;top:409px;width:1px;height:120px;background:#e0e0e0;"></div>
<div style="left:840px;top:409px;width:1px;height:120px;background:#e0e0e0;"></div>
<div style="left:915px;top:409px;width:1px;height:120px;background:#e0e0e0;"></div>
<div style="left:990px;top:409px;width:1px;height:120px;background:#e0e0e0;"></div>
<div style="left:615px;top:454px;width:225px;height:1px;background:#dcdcdc;"></div>
<div style="left:615px;top:467px;width:225px;height:1px;background:#dcdcdc;"></div>
<div style="left:598px;top:481px;width:392px;height:1px;background:#dcdcdc;"></div>
<div style="left:598px;top:495px;width:392px;height:1px;background:#dcdcdc;"></div>
<div style="left:598px;top:509px;width:392px;height:1px;background:#dcdcdc;"></div>
<div style="left:598px;top:523px;width:392px;height:1px;background:#dcdcdc;"></div>
<span class="t" style="left:600.47px;top:419.00px;font-size:9.4px;line-height:12px;color:#1b1b1b;transform:scaleX(1.0500);transform-origin:50% 50%;">№</span>
<span class="t" style="left:705.77px;top:419.00px;font-size:9.4px;line-height:12px;color:#1b1b1b;transform:scaleX(0.9432);transform-origin:50% 50%;">Материал</span>
<span class="t" style="left:856.79px;top:414.00px;font-size:9.4px;line-height:12px;color:#1b1b1b;transform:scaleX(0.9657);transform-origin:50% 50%;">Толщина,</span>
<span class="t" style="left:871.05px;top:425.00px;font-size:9.4px;line-height:12px;color:#1b1b1b;transform:scaleX(1.0085);transform-origin:50% 50%;">мм</span>
<span class="t" style="left:937.15px;top:414.00px;font-size:9.4px;line-height:12px;color:#1b1b1b;transform:scaleX(0.9445);transform-origin:50% 50%;">Общее</span>
<span class="t" style="left:919.52px;top:425.00px;font-size:9.4px;line-height:12px;color:#1b1b1b;transform:scaleX(0.9702);transform-origin:50% 50%;">количество, м3</span>
<span class="t" style="left:617.50px;top:442.00px;font-size:9.4px;line-height:12px;color:#1b1b1b;transform:scaleX(0.9452);transform-origin:0 50%;">Плиты ПДН серия 3.503.1-91</span>
<span class="t" style="left:617.50px;top:456.00px;font-size:9.4px;line-height:12px;color:#1b1b1b;transform:scaleX(0.9592);transform-origin:0 50%;">3.503.1-91.1-03(Основной вариант)</span>
<span class="t" style="left:617.50px;top:470.00px;font-size:9.4px;line-height:12px;color:#1b1b1b;transform:scaleX(0.8925);transform-origin:0 50%;">ПДН-А V</span>
<span class="t" style="left:600.00px;top:456.00px;font-size:9.4px;line-height:12px;color:#1b1b1b;">1</span>
<span class="t" style="left:842.50px;top:456.00px;font-size:9.4px;line-height:12px;color:#1b1b1b;transform:scaleX(0.9581);transform-origin:0 50%;">140</span>
<span class="t" style="left:917.00px;top:456.00px;font-size:9.4px;line-height:12px;color:#1b1b1b;">0</span>
<span class="t" style="left:600.00px;top:484.00px;font-size:9.4px;line-height:12px;color:#1b1b1b;">2</span>
<span class="t" style="left:617.50px;top:484.00px;font-size:9.4px;line-height:12px;color:#1b1b1b;transform:scaleX(0.9209);transform-origin:0 50%;">Песок</span>
<span class="t" style="left:842.50px;top:484.00px;font-size:9.4px;line-height:12px;color:#1b1b1b;transform:scaleX(0.9581);transform-origin:0 50%;">200</span>
<span class="t" style="left:930.00px;top:483.70px;font-size:9.4px;line-height:12px;color:#1b1b1b;">0</span>
<svg style="left:917.500px;top:483.5px;width:12px;height:12px" viewBox="0 0 12 12"><path d="M0.500 0.200h6v1.500h-3.600l2.400 2.400-2.400 2.700h3.600v1.500h-6v-1.200l2.800-3-2.800-2.700z" fill="#245f9f"/><path d="M10.500 3l-6 5.300 2 0.400-2.300 3.100 6.800-5.300-2.300-0.400z" fill="#e9c92e" stroke="#b8951a" stroke-width="0.400"/></svg>
<span class="t" style="left:600.00px;top:497.60px;font-size:9.4px;line-height:12px;color:#1b1b1b;">3</span>
<span class="t" style="left:617.50px;top:497.60px;font-size:9.4px;line-height:12px;color:#1b1b1b;transform:scaleX(0.9528);transform-origin:0 50%;">Гравий</span>
<span class="t" style="left:842.50px;top:497.60px;font-size:9.4px;line-height:12px;color:#1b1b1b;transform:scaleX(0.9581);transform-origin:0 50%;">200</span>
<span class="t" style="left:930.00px;top:497.30px;font-size:9.4px;line-height:12px;color:#1b1b1b;">0</span>
<svg style="left:917.500px;top:497.1px;width:12px;height:12px" viewBox="0 0 12 12"><path d="M0.500 0.200h6v1.500h-3.600l2.400 2.400-2.400 2.700h3.600v1.500h-6v-1.200l2.800-3-2.800-2.700z" fill="#245f9f"/><path d="M10.500 3l-6 5.300 2 0.400-2.300 3.100 6.800-5.300-2.300-0.400z" fill="#e9c92e" stroke="#b8951a" stroke-width="0.400"/></svg>
<span class="t" style="left:600.00px;top:511.50px;font-size:9.4px;line-height:12px;color:#1b1b1b;">4</span>
<span class="t" style="left:617.50px;top:511.50px;font-size:9.4px;line-height:12px;color:#1b1b1b;transform:scaleX(0.9652);transform-origin:0 50%;">Грунт</span>
<span class="t" style="left:842.50px;top:511.50px;font-size:9.4px;line-height:12px;color:#1b1b1b;transform:scaleX(0.9581);transform-origin:0 50%;">200</span>
<span class="t" style="left:930.00px;top:511.20px;font-size:9.4px;line-height:12px;color:#1b1b1b;">0</span>
<svg style="left:917.500px;top:511.0px;width:12px;height:12px" viewBox="0 0 12 12"><path d="M0.500 0.200h6v1.500h-3.600l2.400 2.400-2.400 2.700h3.600v1.500h-6v-1.200l2.800-3-2.800-2.700z" fill="#245f9f"/><path d="M10.500 3l-6 5.300 2 0.400-2.300 3.100 6.800-5.300-2.300-0.400z" fill="#e9c92e" stroke="#b8951a" stroke-width="0.400"/></svg>
<div style="left:596px;top:535px;width:411px;height:95px;background:#ffffff;border:1px solid #adadad;border-top-color:#9c9c9c;border-left:2px solid #c0c0c0;box-sizing:border-box;"></div>
<div style="left:635px;top:538px;width:18px;height:57px;background:#ffffff;border:1px solid #222;box-sizing:border-box;"></div>
<div style="left:707.5px;top:557px;width:57px;height:18.5px;background:#ffffff;border:1px solid #222;box-sizing:border-box;"></div>
<div style="left:600px;top:597px;width:88px;height:13px;background:#e9e9e9;"></div>
<span class="t" style="left:601.00px;top:597.00px;font-size:9.4px;line-height:12px;color:#1b1b1b;transform:scaleX(0.9664);transform-origin:0 50%;">Одна плита поперёк</span>
<span class="t" style="left:698.00px;top:597.00px;font-size:9.4px;line-height:12px;color:#1b1b1b;transform:scaleX(0.9549);transform-origin:0 50%;">Одна плита вдоль</span>
<div style="left:946px;top:636px;width:60px;height:18px;background:#fefefe;border:1px solid #4d86be;border-radius:3.500px;box-sizing:border-box;box-shadow:inset 0 0 0 1px #d9eefc;"></div>
<span class="t" style="left:969.62px;top:639.00px;font-size:9.4px;line-height:12px;color:#1b1b1b;transform:scaleX(1.0500);transform-origin:50% 50%;">ОК</span>
</body></html>
